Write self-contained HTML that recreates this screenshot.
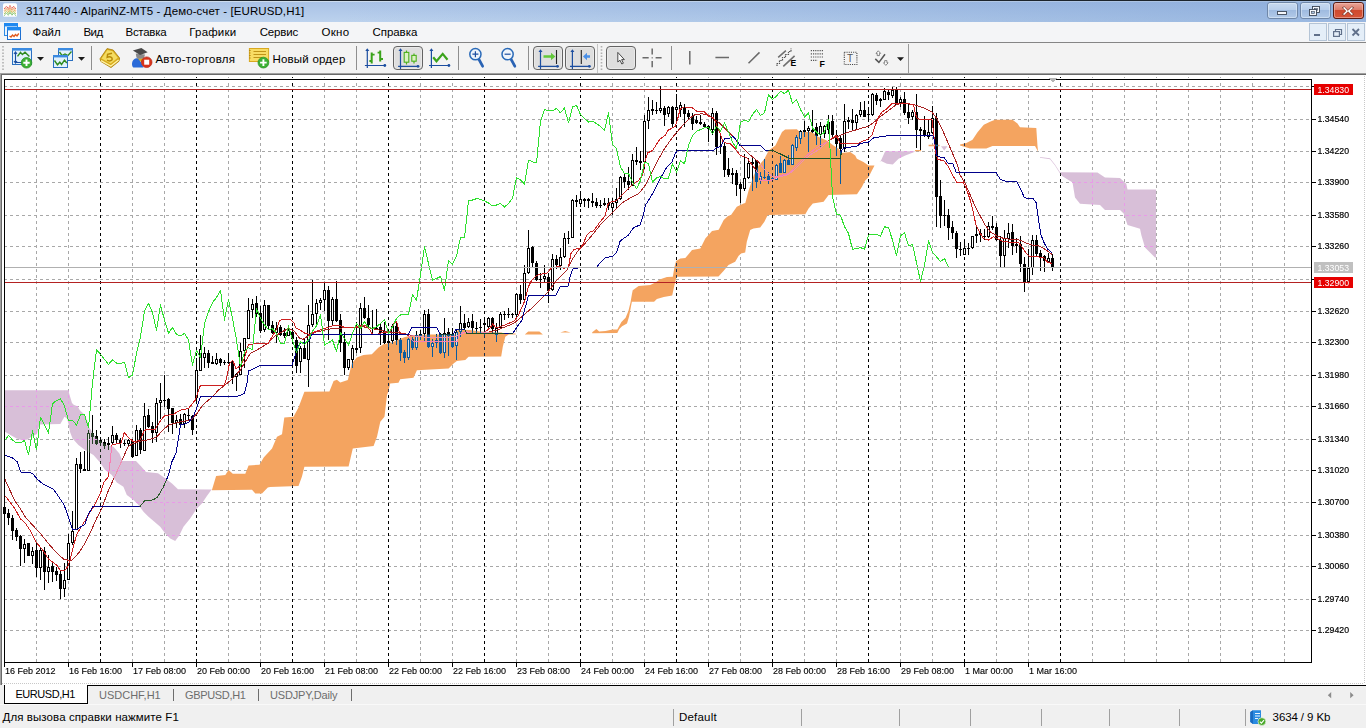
<!DOCTYPE html>
<html lang="ru"><head><meta charset="utf-8"><title>3117440 - AlpariNZ-MT5 - Демо-счет - [EURUSD,H1]</title>
<style>
*{box-sizing:border-box;margin:0;padding:0}
html,body{width:1366px;height:728px;overflow:hidden;background:#f0f0f0;font-family:"Liberation Sans",sans-serif;color:#000}
#app{position:relative;width:1366px;height:728px;overflow:hidden}
.abs{position:absolute}
#title{left:0;top:0;width:1366px;height:22px;background:linear-gradient(#1c242c 0,#1c242c 1px,rgba(0,0,0,0) 1px),linear-gradient(to right,rgba(110,150,208,0) 25%,rgba(110,150,208,0.45) 100%),linear-gradient(#cddcee 0,#cddcee 2px,#a9c2e6 2px,#bcd2ed 22px)}
#title .txt{left:26px;top:5px;font-size:11.5px;line-height:13px;letter-spacing:0.1px;white-space:nowrap;color:#000}
#menu{left:0;top:22px;width:1366px;height:21px;background:#f4f5f7;border-bottom:1px solid #858585}
#menu span{position:absolute;top:4px;font-size:11.5px;line-height:13px;white-space:nowrap}
#tool{left:0;top:43px;width:1366px;height:30px;background:#f3f3f3}
.sep{position:absolute;top:46px;width:1px;height:24px;background:#8e8e8e}
.tbtn{position:absolute;top:46px;height:24px;border:1px solid #636363;border-radius:4px;background:#dedede;box-shadow:inset 0 0 0 1px #e9e9e9}
.tl{position:absolute;top:53px;font-size:11.5px;line-height:13px;white-space:nowrap}
#mdi{left:0;top:73px;width:1366px;height:612px;background:#fff;border-left:1px solid #a0a0a0;border-top:1px solid #a0a0a0}
#mdi:before{content:"";position:absolute;left:0;top:0;right:0;bottom:0;border-left:1px solid #696969;border-top:1px solid #696969}
#tabs{left:0;top:685px;width:1366px;height:19px;background:#f0f0f0}
#tabline{left:88px;top:685px;width:1278px;height:1px;background:#000}
#tabs .t{position:absolute;top:4px;font-size:11px;line-height:13px;color:#6d6d6d;white-space:nowrap}
#tabact{left:4px;top:685px;width:84px;height:19px;background:#fff;border:1px solid #000;border-top:none}
#tabact span{position:absolute;left:10.5px;top:3px;font-size:11px;line-height:13px;letter-spacing:-0.47px;white-space:nowrap}
.tsep{position:absolute;top:689px;width:1px;height:12px;background:#6d6d6d}
#status{left:0;top:704px;width:1366px;height:24px;background:#f0f0f0;border-top:1px solid #f9f9f9}
#status .s{position:absolute;top:6.4px;font-size:11.5px;line-height:13px;white-space:nowrap}
.ssep{position:absolute;top:709px;width:1px;height:17px;background:#a0a0a0}
svg{position:absolute;left:0;top:0;overflow:visible}
svg text{font-family:"Liberation Sans",sans-serif}
</style></head><body><div id="app">
<div id="title" class="abs"><div class="abs txt">3117440 - AlpariNZ-MT5 - Демо-счет - [EURUSD,H1]</div></div>
<div id="menu" class="abs"><span style="left:32.4px">Файл</span><span style="left:83.4px;letter-spacing:-0.45px">Вид</span><span style="left:125.5px;letter-spacing:-0.28px">Вставка</span><span style="left:189.3px;letter-spacing:0.18px">Графики</span><span style="left:259.7px;letter-spacing:-0.18px">Сервис</span><span style="left:321.4px;letter-spacing:0.35px">Окно</span><span style="left:372.5px;letter-spacing:-0.05px">Справка</span></div>
<div id="tool" class="abs"></div>
<div class="sep" style="left:91px"></div><div class="sep" style="left:356px"></div><div class="sep" style="left:458px"></div><div class="sep" style="left:528px"></div><div class="sep" style="left:597px;top:44px;height:29px;background:#c4c4c4"></div><div class="sep" style="left:671px"></div><div class="sep" style="left:908px;top:44px;height:29px;background:#9a9a9a"></div>
<div class="tbtn" style="left:393px;width:30px"></div><div class="tbtn" style="left:533px;width:30px"></div><div class="tbtn" style="left:565px;width:30px"></div><div class="tbtn" style="left:606px;width:30px"></div>
<div class="tl" style="left:155.4px;letter-spacing:0.31px">Авто-торговля</div><div class="tl" style="left:272.4px;letter-spacing:0.22px">Новый ордер</div>
<div id="mdi" class="abs"></div>
<div id="tabs" class="abs"><span class="t" style="left:99px">USDCHF,H1</span><span class="t" style="left:185px;letter-spacing:-0.34px">GBPUSD,H1</span><span class="t" style="left:270px;letter-spacing:-0.17px">USDJPY,Daily</span></div>
<div class="tsep" style="left:173px"></div><div class="tsep" style="left:258px"></div><div class="tsep" style="left:351px"></div>
<div id="tabline" class="abs"></div><div id="tabact" class="abs"><span>EURUSD,H1</span></div>
<div id="status" class="abs"><span class="s" style="left:2.5px;letter-spacing:0.09px">Для вызова справки нажмите F1</span><span class="s" style="left:679px;letter-spacing:0.19px">Default</span><span class="s" style="left:1272.6px;letter-spacing:-0.1px">3634 / 9 Kb</span></div>
<div class="ssep" style="left:673px"></div><div class="ssep" style="left:801px"></div><div class="ssep" style="left:899px"></div><div class="ssep" style="left:970px"></div><div class="ssep" style="left:1041px"></div><div class="ssep" style="left:1109px"></div><div class="ssep" style="left:1179px"></div><div class="ssep" style="left:1245px"></div>
<svg width="1366" height="728" viewBox="0 0 1366 728"><rect x="3" y="3.3" width="14" height="13.4" rx="1.5" fill="#fff"/><polyline points="4.3,8.8 6.4,6.2 8.3,8.4 10,5.6000000000000005 11.9,8.4 13.7,6.2 15.7,8.8" fill="none" stroke="#e03a2a" stroke-width="1" stroke-dasharray="1 0.5"/><polyline points="4.3,10.5 6.4,7.9 8.3,10.100000000000001 10,7.300000000000001 11.9,10.100000000000001 13.7,7.9 15.7,10.5" fill="none" stroke="#e8702a" stroke-width="1" stroke-dasharray="1 0.5"/><polyline points="4.3,12.2 6.4,9.6 8.3,11.8 10,9.0 11.9,11.8 13.7,9.6 15.7,12.2" fill="none" stroke="#e0a030" stroke-width="1" stroke-dasharray="1 0.5"/><polyline points="4.3,13.9 6.4,11.3 8.3,13.5 10,10.700000000000001 11.9,13.5 13.7,11.3 15.7,13.9" fill="none" stroke="#9ab83a" stroke-width="1" stroke-dasharray="1 0.5"/><polyline points="4.3,15.6 6.4,13.0 8.3,15.2 10,12.4 11.9,15.2 13.7,13.0 15.7,15.6" fill="none" stroke="#58b04a" stroke-width="1" stroke-dasharray="1 0.5"/><rect x="4.5" y="23.5" width="13" height="12" fill="#eaf4fd" stroke="#2f8be6"/><rect x="4" y="23" width="14" height="3.4" fill="#1e88f0"/><rect x="7.5" y="27.5" width="13" height="12" fill="#fff" stroke="#1d6fd0"/><rect x="7" y="27" width="14" height="3.4" fill="#1e88f0"/><polyline points="9.5,36 11,37 12.5,35 14,36.5 15.5,34.5 17,36 18.8,33.5" fill="none" stroke="#e25a1c" stroke-width="1.3"/><rect x="12.5" y="48.5" width="19" height="16" fill="#e2f1fc" stroke="#2a6fc0"/><rect x="12" y="48" width="20" height="2.6" fill="#3b8ae0"/><path d="M15.5 52.5V62.5M14 54L15.5 52L17 54M14 61L15.5 63L17 61M15 62.5H23" stroke="#1c4ea0" fill="none" stroke-width="1.1"/><polyline points="17.5,56.4 20.5,52.3 22.4,54.6 25,52.3 29.4,56.6" fill="none" stroke="#2e8a1e" stroke-width="1.4"/><circle cx="26.5" cy="62.8" r="5.3" fill="#3cb034" stroke="#2c9426" stroke-width="0.8"/><path d="M26.5 59.6V66M23.3 62.8H29.7" stroke="#fff" stroke-width="1.9"/><path d="M37 57H44L40.5 60.8Z" fill="#1a1a1a"/><rect x="58.5" y="48.5" width="14" height="12" fill="#e2f1fc" stroke="#2a6fc0"/><rect x="58" y="48" width="15" height="2.4" fill="#3b8ae0"/><polyline points="59.5,52 62,55.5 65,54 68,55.5 71.5,51.5" fill="none" stroke="#2e8a1e" stroke-width="1.3"/><rect x="53.5" y="55.5" width="14" height="12" fill="#e2f1fc" stroke="#2a6fc0"/><rect x="53" y="55" width="15" height="2.4" fill="#3b8ae0"/><polyline points="54.5,60.5 57.5,64.8 59.8,62.2 61.5,64.5 64.5,60.2 66.8,63" fill="none" stroke="#2e8a1e" stroke-width="1.4"/><path d="M78 57H85L81.5 60.8Z" fill="#1a1a1a"/><path d="M100 58.8L107 48.6L113.2 50L119.6 58L119 61.2L111 67.6L100.8 61.4Z" fill="#d9ac1c" stroke="#a87c0a" stroke-width="0.8"/><path d="M101.5 58.6L107.4 50L112.6 51.2L117.8 57.8L110.8 63.6Z" fill="#f4dc62"/><path d="M101 60.6L110.8 66L118.6 60" fill="none" stroke="#fff3a8" stroke-width="1.2"/><path d="M112 53.2L107.6 54.4L107.2 57.2C109.6 56.2 112.4 57.2 112.2 59.2C112 61 109 61.4 107 60.2" fill="none" stroke="#b88a08" stroke-width="1.5"/><path d="M132 64C132 59.5 135.5 57.6 139 58.4L143.6 67.6H133.4C132.4 66.8 132 65.6 132 64Z" fill="#2a6ad8"/><path d="M137.5 58.2L143.4 58.2L141.6 62.6Z" fill="#d8b020"/><path d="M135.8 53.6L145 54.6L144 57.8C141.4 59.2 138.4 58.8 136.4 57.4Z" fill="#8a8a8a"/><path d="M132.9 50.4L141.4 48L147.7 52.2L140.1 55Z" fill="#4a4a4a"/><circle cx="146.7" cy="62.2" r="5.3" fill="#d8341c" stroke="#b82410" stroke-width="0.7"/><rect x="144.2" y="59.7" width="5" height="5" fill="#fff"/><rect x="249.4" y="48.5" width="19.2" height="13" fill="#f8dc64" stroke="#d8a820"/><path d="M249 50.5h1.6M249 53h1.6M249 55.5h1.6M249 58h1.6" stroke="#b88a10" stroke-width="1"/><path d="M253.5 51.5H266M253.5 54.5H266M253.5 57.5H262" stroke="#c09418" stroke-width="1.2"/><circle cx="263.4" cy="62.6" r="5.4" fill="#3cb034" stroke="#2c9426" stroke-width="0.8"/><path d="M263.4 59.3V65.9M260.1 62.6H266.7" stroke="#fff" stroke-width="1.9"/><path d="M367.3 49.6V68.1M364.90000000000003 65.5H384.8" stroke="#1c4ea0" stroke-width="1.2" fill="none"/><path d="M365.3 51.0L367.3 48.2L369.3 51.0Z" fill="#1c4ea0"/><circle cx="384.8" cy="65.5" r="1.4" fill="#1c4ea0"/><path d="M371.7 52.4V63.4M380.2 50.6V61.6" stroke="#3aa31a" stroke-width="2"/><path d="M369.4 61H371.7M371.7 54.6H374.6M377.6 52.6H380.2M380.2 59H383" stroke="#3aa31a" stroke-width="1.8"/><path d="M400.5 49.6V68.89999999999999M398.1 66.3H418.0" stroke="#1c4ea0" stroke-width="1.2" fill="none"/><path d="M398.5 51.0L400.5 48.2L402.5 51.0Z" fill="#1c4ea0"/><circle cx="418.0" cy="66.3" r="1.4" fill="#1c4ea0"/><path d="M406.5 50.5V64.5M414 53.5V63.5" stroke="#4cb01c" stroke-width="1.2"/><rect x="404.2" y="52.4" width="4.6" height="9.8" fill="#dcf2c4" stroke="#4cb01c" stroke-width="1.1"/><rect x="411.8" y="55.4" width="4.4" height="5.8" fill="#dcf2c4" stroke="#4cb01c" stroke-width="1.1"/><path d="M431.4 49.6V68.1M429.0 65.5H448.9" stroke="#1c4ea0" stroke-width="1.2" fill="none"/><path d="M429.4 51.0L431.4 48.2L433.4 51.0Z" fill="#1c4ea0"/><circle cx="448.9" cy="65.5" r="1.4" fill="#1c4ea0"/><polyline points="433.2,57.2 436.5,61.2 442.7,53.9 447.5,59.7" fill="none" stroke="#3aa31a" stroke-width="2.2"/><path d="M478.79999999999995 59.2L482.59999999999997 66.2" stroke="#2a63b4" stroke-width="2.8" stroke-linecap="round"/><circle cx="475.4" cy="54.2" r="5.6" fill="#eef4fb" stroke="#2a6ab8" stroke-width="1.5"/><path d="M472.4 54.2H478.4M475.4 51.2V57.2" stroke="#1c4ea0" stroke-width="1.2"/><path d="M511.0 59.2L514.8000000000001 66.2" stroke="#2a63b4" stroke-width="2.8" stroke-linecap="round"/><circle cx="507.6" cy="54.2" r="5.6" fill="#eef4fb" stroke="#2a6ab8" stroke-width="1.5"/><path d="M504.6 54.2H510.6" stroke="#1c4ea0" stroke-width="1.2"/><path d="M540.5 50.6V68.89999999999999M538.1 66.3H557.5" stroke="#1c4ea0" stroke-width="1.2" fill="none"/><path d="M538.5 52.0L540.5 49.2L542.5 52.0Z" fill="#1c4ea0"/><circle cx="557.5" cy="66.3" r="1.4" fill="#1c4ea0"/><path d="M543.5 55.2H551V52.8L555.4 56.5L551 60.2V57.8H543.5Z" fill="#62c83a"/><path d="M556.5 50V64" stroke="#222" stroke-width="1.1"/><path d="M572.4 50.6V68.89999999999999M570.0 66.3H589.4" stroke="#1c4ea0" stroke-width="1.2" fill="none"/><path d="M570.4 52.0L572.4 49.2L574.4 52.0Z" fill="#1c4ea0"/><circle cx="589.4" cy="66.3" r="1.4" fill="#1c4ea0"/><path d="M590 55.2H587V52.8L583 56.5L587 60.2V57.8H590Z" fill="#4a90e8"/><path d="M581.3 50V64" stroke="#222" stroke-width="1.1"/><path d="M601.5 46V70" stroke="#b0b0b0" stroke-width="1.6" stroke-dasharray="1.5 1.7"/><path d="M3 46V70" stroke="#b0b0b0" stroke-width="1.6" stroke-dasharray="1.5 1.7"/><path d="M617.8 52.4V62L620 60.2L621.8 64L623.4 63.2L621.6 59.6H624.4Z" fill="#f8f8f8" stroke="#4a4a4a" stroke-width="1"/><path d="M642.5 57.8H648.7M655.6 57.8H661.6M652.2 48.4V54.6M652.2 61V67.2" stroke="#6a6a6a" stroke-width="1.5"/><rect x="651.6" y="57.2" width="1.2" height="1.2" fill="#6a6a6a"/><path d="M689.8 51V64.5M715.4 57.6H729M748.5 63.3L759.5 52.4" stroke="#6a6a6a" stroke-width="1.5" fill="none"/><path d="M778.2 57.3L785.9 50.7M783.3 66.3L794.6 55.8" stroke="#707070" stroke-width="1.6"/><path d="M777 66V63.5H779.5V60.5H782.5V57.5H785.5V54.5H788.5V51.5H791V48.5" stroke="#555" stroke-width="1.2" fill="none" stroke-dasharray="1.4 0.8"/><text x="790.4" y="66.4" font-size="8.6" font-weight="bold" font-family="Liberation Sans,sans-serif">E</text><path d="M810.8 50.7H824M810.8 53.8H824M810.8 57H824M810.8 60.4H817.5" stroke="#555" stroke-width="1.2" stroke-dasharray="1.2 1"/><text x="819.6" y="66.6" font-size="8.8" font-weight="bold" font-family="Liberation Sans,sans-serif">F</text><rect x="844.3" y="52.3" width="12.6" height="12.2" fill="none" stroke="#444" stroke-width="1.1" stroke-dasharray="1.1 1.1"/><text x="846.9" y="62.4" font-size="10" font-family="Liberation Serif,serif" fill="#555">T</text><path d="M875.3 58.9L878.9 62.4L885 54.2" stroke="#555" stroke-width="1.5" fill="none"/><path d="M878.3 50.8L880.6 53.4H879.4V55.6H877.2V53.4H876Z M885.8 65.4L883.5 62.8H884.7V60.6H886.9V62.8H888.1Z" fill="#fff" stroke="#666" stroke-width="0.8"/><path d="M897 57.2H904L900.5 60.9Z" fill="#1a1a1a"/><defs><linearGradient id="gb" x1="0" y1="0" x2="0" y2="1"><stop offset="0" stop-color="#c9dbf1"/><stop offset="0.45" stop-color="#b9cfec"/><stop offset="0.5" stop-color="#9fbbe0"/><stop offset="1" stop-color="#b4cbe9"/></linearGradient><linearGradient id="gr" x1="0" y1="0" x2="0" y2="1"><stop offset="0" stop-color="#eaa79b"/><stop offset="0.45" stop-color="#dd7c6a"/><stop offset="0.5" stop-color="#cf4a2f"/><stop offset="1" stop-color="#d8563a"/></linearGradient></defs><rect x="1267.5" y="2.5" width="30" height="16" rx="2.5" fill="url(#gb)" stroke="#6f87a8"/><rect x="1268.5" y="3.5" width="28" height="14" rx="1.8" fill="none" stroke="#e4eefa" stroke-opacity="0.55"/><rect x="1300.5" y="2.5" width="30" height="16" rx="2.5" fill="url(#gb)" stroke="#6f87a8"/><rect x="1301.5" y="3.5" width="28" height="14" rx="1.8" fill="none" stroke="#e4eefa" stroke-opacity="0.55"/><rect x="1333.5" y="2.5" width="30" height="16" rx="2.5" fill="url(#gr)" stroke="#5a1c14"/><rect x="1334.5" y="3.5" width="28" height="14" rx="1.8" fill="none" stroke="#f4c2b8" stroke-opacity="0.55"/><rect x="1277.5" y="11.5" width="9" height="3" fill="#f4f6fa" stroke="#3c4656" stroke-width="0.9"/><rect x="1312.5" y="6.5" width="7" height="6" fill="#f4f6fa" stroke="#3c4656" stroke-width="0.9"/><rect x="1314.5" y="8.5" width="3" height="2" fill="#a8c0e0" stroke="#3c4656" stroke-width="0.6"/><rect x="1309.5" y="9.5" width="7" height="6" fill="#f4f6fa" stroke="#3c4656" stroke-width="0.9"/><rect x="1311.5" y="11.5" width="3" height="2" fill="#a8c0e0" stroke="#3c4656" stroke-width="0.6"/><path d="M1344.4 6.8L1348 10.4L1351.6 6.8L1353.8 7.6L1350.2 11L1353.8 14.4L1351.6 15.2L1348 11.8L1344.4 15.2L1342.2 14.4L1345.8 11L1342.2 7.6Z" fill="#fff" stroke="#6a2a20" stroke-width="0.7"/><rect x="1309.5" y="23.5" width="17" height="17" fill="#e4eef8" stroke="#b4c4d6"/><rect x="1328.5" y="23.5" width="17" height="17" fill="#e4eef8" stroke="#b4c4d6"/><rect x="1347.5" y="23.5" width="17" height="17" fill="#e4eef8" stroke="#b4c4d6"/><rect x="1314" y="34" width="6" height="2" fill="#60708a"/><path d="M1335.5 31V29.5H1341.5V34.5H1340" stroke="#60708a" stroke-width="1.2" fill="none"/><rect x="1333.6" y="31.6" width="5.8" height="4.8" fill="none" stroke="#60708a" stroke-width="1.2"/><path d="M1352.5 29L1359 35.5M1359 29L1352.5 35.5" stroke="#60708a" stroke-width="1.8"/><path d="M1250.3 712L1253 710.2H1261V724H1253L1250.3 722Z" fill="#2a8ae0"/><path d="M1250.3 712L1253 710.2V724L1250.3 722Z" fill="#1a6ac0"/><path d="M1255 713.5H1260M1255 716H1260M1255 718.5H1258" stroke="#e8f4ff" stroke-width="1.1"/><circle cx="1261.9" cy="721.6" r="3.9" fill="#4aa82a" stroke="#e8f4e0" stroke-width="0.7"/><path d="M1259.9 721.6L1261.4 723.1L1264 720.2" stroke="#fff" stroke-width="1.1" fill="none"/><path d="M1331.2 692.1V698.3L1327.8 695.2Z M1350.2 692.1V698.3L1353.6 695.2Z" fill="#8c8c8c"/></svg>
<svg width="1366" height="728" viewBox="0 0 1366 728" style="isolation:isolate"><rect x="2" y="75" width="1362" height="608" fill="#fff"/><g shape-rendering="crispEdges"><line x1="4" y1="86.5" x2="1311" y2="86.5" stroke="#a8a8a8" stroke-dasharray="3 3"/><line x1="4" y1="119.5" x2="1311" y2="119.5" stroke="#a8a8a8" stroke-dasharray="3 3"/><line x1="4" y1="151.5" x2="1311" y2="151.5" stroke="#a8a8a8" stroke-dasharray="3 3"/><line x1="4" y1="182.5" x2="1311" y2="182.5" stroke="#a8a8a8" stroke-dasharray="3 3"/><line x1="4" y1="215.5" x2="1311" y2="215.5" stroke="#a8a8a8" stroke-dasharray="3 3"/><line x1="4" y1="246.5" x2="1311" y2="246.5" stroke="#a8a8a8" stroke-dasharray="3 3"/><line x1="4" y1="279.5" x2="1311" y2="279.5" stroke="#a8a8a8" stroke-dasharray="3 3"/><line x1="4" y1="311.5" x2="1311" y2="311.5" stroke="#a8a8a8" stroke-dasharray="3 3"/><line x1="4" y1="342.5" x2="1311" y2="342.5" stroke="#a8a8a8" stroke-dasharray="3 3"/><line x1="4" y1="375.5" x2="1311" y2="375.5" stroke="#a8a8a8" stroke-dasharray="3 3"/><line x1="4" y1="406.5" x2="1311" y2="406.5" stroke="#a8a8a8" stroke-dasharray="3 3"/><line x1="4" y1="439.5" x2="1311" y2="439.5" stroke="#a8a8a8" stroke-dasharray="3 3"/><line x1="4" y1="470.5" x2="1311" y2="470.5" stroke="#a8a8a8" stroke-dasharray="3 3"/><line x1="4" y1="502.5" x2="1311" y2="502.5" stroke="#a8a8a8" stroke-dasharray="3 3"/><line x1="4" y1="535.5" x2="1311" y2="535.5" stroke="#a8a8a8" stroke-dasharray="3 3"/><line x1="4" y1="566.5" x2="1311" y2="566.5" stroke="#a8a8a8" stroke-dasharray="3 3"/><line x1="4" y1="599.5" x2="1311" y2="599.5" stroke="#a8a8a8" stroke-dasharray="3 3"/><line x1="4" y1="630.5" x2="1311" y2="630.5" stroke="#a8a8a8" stroke-dasharray="3 3"/><line x1="36.5" y1="80" x2="36.5" y2="662" stroke="#a8a8a8" stroke-dasharray="3 3" stroke-dashoffset="3"/><rect x="36" y="77" width="1" height="1" fill="#a8a8a8"/><line x1="68.5" y1="80" x2="68.5" y2="662" stroke="#a8a8a8" stroke-dasharray="3 3" stroke-dashoffset="3"/><rect x="68" y="77" width="1" height="1" fill="#a8a8a8"/><line x1="100.5" y1="80" x2="100.5" y2="662" stroke="#000" stroke-dasharray="3 3" stroke-dashoffset="3"/><rect x="100" y="77" width="1" height="1" fill="#000"/><line x1="132.5" y1="80" x2="132.5" y2="662" stroke="#a8a8a8" stroke-dasharray="3 3" stroke-dashoffset="3"/><rect x="132" y="77" width="1" height="1" fill="#a8a8a8"/><line x1="164.5" y1="80" x2="164.5" y2="662" stroke="#a8a8a8" stroke-dasharray="3 3" stroke-dashoffset="3"/><rect x="164" y="77" width="1" height="1" fill="#a8a8a8"/><line x1="196.5" y1="80" x2="196.5" y2="662" stroke="#000" stroke-dasharray="3 3" stroke-dashoffset="3"/><rect x="196" y="77" width="1" height="1" fill="#000"/><line x1="228.5" y1="80" x2="228.5" y2="662" stroke="#a8a8a8" stroke-dasharray="3 3" stroke-dashoffset="3"/><rect x="228" y="77" width="1" height="1" fill="#a8a8a8"/><line x1="260.5" y1="80" x2="260.5" y2="662" stroke="#a8a8a8" stroke-dasharray="3 3" stroke-dashoffset="3"/><rect x="260" y="77" width="1" height="1" fill="#a8a8a8"/><line x1="292.5" y1="80" x2="292.5" y2="662" stroke="#000" stroke-dasharray="3 3" stroke-dashoffset="3"/><rect x="292" y="77" width="1" height="1" fill="#000"/><line x1="324.5" y1="80" x2="324.5" y2="662" stroke="#a8a8a8" stroke-dasharray="3 3" stroke-dashoffset="3"/><rect x="324" y="77" width="1" height="1" fill="#a8a8a8"/><line x1="356.5" y1="80" x2="356.5" y2="662" stroke="#a8a8a8" stroke-dasharray="3 3" stroke-dashoffset="3"/><rect x="356" y="77" width="1" height="1" fill="#a8a8a8"/><line x1="388.5" y1="80" x2="388.5" y2="662" stroke="#000" stroke-dasharray="3 3" stroke-dashoffset="3"/><rect x="388" y="77" width="1" height="1" fill="#000"/><line x1="420.5" y1="80" x2="420.5" y2="662" stroke="#a8a8a8" stroke-dasharray="3 3" stroke-dashoffset="3"/><rect x="420" y="77" width="1" height="1" fill="#a8a8a8"/><line x1="452.5" y1="80" x2="452.5" y2="662" stroke="#a8a8a8" stroke-dasharray="3 3" stroke-dashoffset="3"/><rect x="452" y="77" width="1" height="1" fill="#a8a8a8"/><line x1="484.5" y1="80" x2="484.5" y2="662" stroke="#000" stroke-dasharray="3 3" stroke-dashoffset="3"/><rect x="484" y="77" width="1" height="1" fill="#000"/><line x1="516.5" y1="80" x2="516.5" y2="662" stroke="#a8a8a8" stroke-dasharray="3 3" stroke-dashoffset="3"/><rect x="516" y="77" width="1" height="1" fill="#a8a8a8"/><line x1="548.5" y1="80" x2="548.5" y2="662" stroke="#a8a8a8" stroke-dasharray="3 3" stroke-dashoffset="3"/><rect x="548" y="77" width="1" height="1" fill="#a8a8a8"/><line x1="580.5" y1="80" x2="580.5" y2="662" stroke="#000" stroke-dasharray="3 3" stroke-dashoffset="3"/><rect x="580" y="77" width="1" height="1" fill="#000"/><line x1="612.5" y1="80" x2="612.5" y2="662" stroke="#a8a8a8" stroke-dasharray="3 3" stroke-dashoffset="3"/><rect x="612" y="77" width="1" height="1" fill="#a8a8a8"/><line x1="644.5" y1="80" x2="644.5" y2="662" stroke="#a8a8a8" stroke-dasharray="3 3" stroke-dashoffset="3"/><rect x="644" y="77" width="1" height="1" fill="#a8a8a8"/><line x1="676.5" y1="80" x2="676.5" y2="662" stroke="#000" stroke-dasharray="3 3" stroke-dashoffset="3"/><rect x="676" y="77" width="1" height="1" fill="#000"/><line x1="708.5" y1="80" x2="708.5" y2="662" stroke="#a8a8a8" stroke-dasharray="3 3" stroke-dashoffset="3"/><rect x="708" y="77" width="1" height="1" fill="#a8a8a8"/><line x1="740.5" y1="80" x2="740.5" y2="662" stroke="#a8a8a8" stroke-dasharray="3 3" stroke-dashoffset="3"/><rect x="740" y="77" width="1" height="1" fill="#a8a8a8"/><line x1="772.5" y1="80" x2="772.5" y2="662" stroke="#000" stroke-dasharray="3 3" stroke-dashoffset="3"/><rect x="772" y="77" width="1" height="1" fill="#000"/><line x1="804.5" y1="80" x2="804.5" y2="662" stroke="#a8a8a8" stroke-dasharray="3 3" stroke-dashoffset="3"/><rect x="804" y="77" width="1" height="1" fill="#a8a8a8"/><line x1="836.5" y1="80" x2="836.5" y2="662" stroke="#a8a8a8" stroke-dasharray="3 3" stroke-dashoffset="3"/><rect x="836" y="77" width="1" height="1" fill="#a8a8a8"/><line x1="868.5" y1="80" x2="868.5" y2="662" stroke="#000" stroke-dasharray="3 3" stroke-dashoffset="3"/><rect x="868" y="77" width="1" height="1" fill="#000"/><line x1="900.5" y1="80" x2="900.5" y2="662" stroke="#a8a8a8" stroke-dasharray="3 3" stroke-dashoffset="3"/><rect x="900" y="77" width="1" height="1" fill="#a8a8a8"/><line x1="932.5" y1="80" x2="932.5" y2="662" stroke="#a8a8a8" stroke-dasharray="3 3" stroke-dashoffset="3"/><rect x="932" y="77" width="1" height="1" fill="#a8a8a8"/><line x1="964.5" y1="80" x2="964.5" y2="662" stroke="#000" stroke-dasharray="3 3" stroke-dashoffset="3"/><rect x="964" y="77" width="1" height="1" fill="#000"/><line x1="996.5" y1="80" x2="996.5" y2="662" stroke="#a8a8a8" stroke-dasharray="3 3" stroke-dashoffset="3"/><rect x="996" y="77" width="1" height="1" fill="#a8a8a8"/><line x1="1028.5" y1="80" x2="1028.5" y2="662" stroke="#a8a8a8" stroke-dasharray="3 3" stroke-dashoffset="3"/><rect x="1028" y="77" width="1" height="1" fill="#a8a8a8"/><line x1="1060.5" y1="80" x2="1060.5" y2="662" stroke="#000" stroke-dasharray="3 3" stroke-dashoffset="3"/><rect x="1060" y="77" width="1" height="1" fill="#000"/><line x1="1092.5" y1="80" x2="1092.5" y2="662" stroke="#a8a8a8" stroke-dasharray="3 3" stroke-dashoffset="3"/><rect x="1092" y="77" width="1" height="1" fill="#a8a8a8"/><line x1="1124.5" y1="80" x2="1124.5" y2="662" stroke="#a8a8a8" stroke-dasharray="3 3" stroke-dashoffset="3"/><rect x="1124" y="77" width="1" height="1" fill="#a8a8a8"/><line x1="1156.5" y1="80" x2="1156.5" y2="662" stroke="#a8a8a8" stroke-dasharray="3 3" stroke-dashoffset="3"/><rect x="1156" y="77" width="1" height="1" fill="#a8a8a8"/><line x1="1188.5" y1="80" x2="1188.5" y2="662" stroke="#a8a8a8" stroke-dasharray="3 3" stroke-dashoffset="3"/><rect x="1188" y="77" width="1" height="1" fill="#a8a8a8"/><line x1="1220.5" y1="80" x2="1220.5" y2="662" stroke="#a8a8a8" stroke-dasharray="3 3" stroke-dashoffset="3"/><rect x="1220" y="77" width="1" height="1" fill="#a8a8a8"/><line x1="1252.5" y1="80" x2="1252.5" y2="662" stroke="#a8a8a8" stroke-dasharray="3 3" stroke-dashoffset="3"/><rect x="1252" y="77" width="1" height="1" fill="#a8a8a8"/><line x1="1284.5" y1="80" x2="1284.5" y2="662" stroke="#a8a8a8" stroke-dasharray="3 3" stroke-dashoffset="3"/><rect x="1284" y="77" width="1" height="1" fill="#a8a8a8"/></g><defs><clipPath id="cpO"><path d="M212.0 489.8 L216.1 475.9 L225.3 475.1 L228.6 470.1 L232.8 473.8 L245.3 473.8 L248.6 465.4 L259.5 464.7 L263.7 457.6 L272.0 448.4 L277.0 436.7 L282.0 434.2 L284.3 417.6 L293.5 416.7 L298.5 407.6 L304.4 391.7 L329.4 391.4 L333.6 380.9 L336.9 379.7 L340.3 382.5 L347.8 380.0 L351.8 363.5 L356.8 357.6 L363.4 355.1 L371.8 354.3 L378.5 347.6 L383.5 344.3 L392.0 342.5 L399.6 339.0 L405.0 337.0 L414.0 335.0 L430.0 334.4 L455.0 334.4 L458.0 329.7 L470.0 330.0 L480.0 331.5 L501.6 332.5 L505.0 334.0 L508.7 334.0 L508.7 334.6 L505.3 336.8 L502.8 346.8 L501.2 356.5 L468.6 356.8 L465.3 360.1 L456.9 361.0 L453.6 363.5 L448.6 368.5 L416.9 370.2 L413.5 377.7 L400.2 379.3 L398.5 382.7 L390.2 383.5 L388.5 391.0 L387.0 395.0 L384.5 416.7 L380.3 421.8 L377.0 436.8 L373.6 446.0 L352.8 448.5 L348.6 466.5 L304.4 466.8 L301.9 476.8 L298.5 486.0 L270.1 486.9 L267.8 487.6 L262.0 493.5 L255.3 493.5 L252.0 489.8 L212.0 490.3ZM592.2 332.2 L596.4 328.9 L599.2 331.4 L605.4 331.0 L612.4 329.6 L617.3 329.6 L621.4 322.0 L625.6 317.8 L628.4 310.9 L630.5 302.5 L631.9 294.2 L632.7 290.2 L638.6 286.0 L650.3 285.1 L655.3 282.6 L660.3 279.3 L666.9 277.1 L672.8 276.8 L674.5 266.8 L676.1 260.9 L680.3 258.4 L685.3 258.1 L692.0 250.1 L700.3 248.4 L705.3 238.4 L712.0 230.9 L718.7 229.7 L723.7 220.0 L728.0 215.9 L731.0 215.1 L736.8 206.7 L743.5 203.4 L745.3 203.0 L748.6 190.5 L753.7 175.5 L758.7 165.5 L764.5 158.8 L768.7 150.4 L775.4 145.4 L778.7 138.8 L782.0 132.1 L785.1 129.6 L796.8 129.2 L800.1 132.1 L811.8 132.1 L818.5 137.1 L826.8 140.4 L833.5 145.4 L838.5 148.8 L841.8 153.0 L850.2 152.1 L855.2 155.5 L856.9 158.8 L863.5 162.1 L868.5 165.5 L874.4 165.5 L874.4 165.8 L871.9 170.5 L868.5 177.2 L865.2 180.5 L862.0 186.7 L857.0 194.2 L828.6 195.0 L823.6 201.7 L812.8 203.4 L808.6 208.4 L805.3 214.2 L767.7 215.1 L764.4 221.7 L760.2 227.6 L753.5 228.4 L750.2 230.1 L746.8 241.8 L745.2 252.6 L741.0 253.5 L738.5 256.0 L735.2 261.8 L728.5 265.1 L723.5 271.0 L718.5 276.5 L677.1 276.8 L676.1 278.5 L674.5 285.1 L672.2 295.4 L663.8 297.0 L656.9 299.0 L654.1 301.8 L631.9 301.8 L631.2 305.3 L629.1 316.4 L627.0 323.4 L622.1 326.2 L619.3 328.9 L617.3 332.9 L592.2 333.2ZM960.0 144.6 L966.3 143.0 L972.5 139.8 L977.5 132.3 L983.8 124.8 L990.0 121.8 L995.0 119.8 L1012.5 119.8 L1017.5 123.5 L1020.0 127.3 L1036.3 128.0 L1037.5 146.0 L1038.0 151.0 L1038.0 151.5 L1035.0 146.0 L992.5 146.0 L986.3 148.5 L970.0 148.5 L960.0 145.5ZM508.7 333.4 L515.7 333.4 L515.7 334.6 L508.7 334.6ZM524.8 334.6 L528.2 331.4 L539.4 331.4 L542.9 334.6ZM560.2 332.6 L565.1 331.0 L570.7 332.6ZM915.0 150.0 L921.0 150.0 L921.0 151.2 L915.0 151.2ZM928.6 144.8 L939.5 144.8 L939.5 146.3 L928.6 146.3Z"/></clipPath><clipPath id="cpP"><path d="M4.5 390.3 L68.3 390.3 L69.9 395.9 L72.0 403.0 L73.7 404.7 L77.9 406.4 L79.6 410.1 L83.8 413.9 L87.1 420.2 L88.8 426.9 L91.0 430.1 L96.0 437.6 L100.2 440.9 L106.8 445.1 L113.5 446.8 L119.4 453.5 L122.5 461.0 L136.0 461.0 L141.0 466.3 L146.0 472.0 L158.0 473.3 L165.5 478.4 L172.0 483.5 L178.0 489.3 L212.0 489.5 L211.1 490.3 L206.9 496.0 L201.9 503.5 L196.9 508.5 L190.2 518.5 L183.5 526.8 L179.4 535.2 L175.2 541.0 L170.2 538.5 L165.2 533.5 L160.2 526.8 L153.5 521.0 L148.5 516.8 L143.5 511.8 L138.5 505.1 L133.5 500.1 L126.8 495.1 L123.4 486.8 L116.8 482.6 L111.8 475.1 L105.1 470.1 L100.1 462.6 L93.4 455.1 L85.0 450.0 L78.4 445.0 L72.5 438.4 L70.0 432.0 L68.3 423.0 L67.0 418.5 L64.5 416.8 L60.3 424.0 L39.4 424.4 L36.9 434.0 L31.0 437.0 L27.6 439.4 L21.8 440.3 L16.7 438.6 L10.9 435.2 L4.5 431.5ZM1040.0 157.0 L1050.0 158.3 L1055.0 164.5 L1060.0 172.3 L1097.5 172.5 L1105.0 177.5 L1120.0 178.0 L1126.3 183.8 L1127.5 189.5 L1156.0 189.5 L1156.0 257.5 L1155.0 257.5 L1145.0 247.5 L1141.3 235.0 L1140.0 228.8 L1127.5 225.0 L1123.8 213.8 L1120.0 210.0 L1105.0 210.0 L1100.0 205.0 L1080.0 203.8 L1075.0 197.5 L1072.5 182.5 L1062.5 176.3 L1060.0 173.5 L1055.0 165.5 L1050.0 159.2 L1040.0 157.8ZM879.4 162.1 L881.0 160.5 L885.2 151.3 L913.6 151.3 L915.3 151.5 L912.0 153.0 L905.3 155.5 L898.6 158.8 L892.8 164.6 L886.9 163.8 L881.1 161.0ZM941.0 146.3 L947.5 146.3 L944.2 150.6Z"/></clipPath></defs><path d="M212.0 489.8 L216.1 475.9 L225.3 475.1 L228.6 470.1 L232.8 473.8 L245.3 473.8 L248.6 465.4 L259.5 464.7 L263.7 457.6 L272.0 448.4 L277.0 436.7 L282.0 434.2 L284.3 417.6 L293.5 416.7 L298.5 407.6 L304.4 391.7 L329.4 391.4 L333.6 380.9 L336.9 379.7 L340.3 382.5 L347.8 380.0 L351.8 363.5 L356.8 357.6 L363.4 355.1 L371.8 354.3 L378.5 347.6 L383.5 344.3 L392.0 342.5 L399.6 339.0 L405.0 337.0 L414.0 335.0 L430.0 334.4 L455.0 334.4 L458.0 329.7 L470.0 330.0 L480.0 331.5 L501.6 332.5 L505.0 334.0 L508.7 334.0 L508.7 334.6 L505.3 336.8 L502.8 346.8 L501.2 356.5 L468.6 356.8 L465.3 360.1 L456.9 361.0 L453.6 363.5 L448.6 368.5 L416.9 370.2 L413.5 377.7 L400.2 379.3 L398.5 382.7 L390.2 383.5 L388.5 391.0 L387.0 395.0 L384.5 416.7 L380.3 421.8 L377.0 436.8 L373.6 446.0 L352.8 448.5 L348.6 466.5 L304.4 466.8 L301.9 476.8 L298.5 486.0 L270.1 486.9 L267.8 487.6 L262.0 493.5 L255.3 493.5 L252.0 489.8 L212.0 490.3ZM592.2 332.2 L596.4 328.9 L599.2 331.4 L605.4 331.0 L612.4 329.6 L617.3 329.6 L621.4 322.0 L625.6 317.8 L628.4 310.9 L630.5 302.5 L631.9 294.2 L632.7 290.2 L638.6 286.0 L650.3 285.1 L655.3 282.6 L660.3 279.3 L666.9 277.1 L672.8 276.8 L674.5 266.8 L676.1 260.9 L680.3 258.4 L685.3 258.1 L692.0 250.1 L700.3 248.4 L705.3 238.4 L712.0 230.9 L718.7 229.7 L723.7 220.0 L728.0 215.9 L731.0 215.1 L736.8 206.7 L743.5 203.4 L745.3 203.0 L748.6 190.5 L753.7 175.5 L758.7 165.5 L764.5 158.8 L768.7 150.4 L775.4 145.4 L778.7 138.8 L782.0 132.1 L785.1 129.6 L796.8 129.2 L800.1 132.1 L811.8 132.1 L818.5 137.1 L826.8 140.4 L833.5 145.4 L838.5 148.8 L841.8 153.0 L850.2 152.1 L855.2 155.5 L856.9 158.8 L863.5 162.1 L868.5 165.5 L874.4 165.5 L874.4 165.8 L871.9 170.5 L868.5 177.2 L865.2 180.5 L862.0 186.7 L857.0 194.2 L828.6 195.0 L823.6 201.7 L812.8 203.4 L808.6 208.4 L805.3 214.2 L767.7 215.1 L764.4 221.7 L760.2 227.6 L753.5 228.4 L750.2 230.1 L746.8 241.8 L745.2 252.6 L741.0 253.5 L738.5 256.0 L735.2 261.8 L728.5 265.1 L723.5 271.0 L718.5 276.5 L677.1 276.8 L676.1 278.5 L674.5 285.1 L672.2 295.4 L663.8 297.0 L656.9 299.0 L654.1 301.8 L631.9 301.8 L631.2 305.3 L629.1 316.4 L627.0 323.4 L622.1 326.2 L619.3 328.9 L617.3 332.9 L592.2 333.2ZM960.0 144.6 L966.3 143.0 L972.5 139.8 L977.5 132.3 L983.8 124.8 L990.0 121.8 L995.0 119.8 L1012.5 119.8 L1017.5 123.5 L1020.0 127.3 L1036.3 128.0 L1037.5 146.0 L1038.0 151.0 L1038.0 151.5 L1035.0 146.0 L992.5 146.0 L986.3 148.5 L970.0 148.5 L960.0 145.5ZM508.7 333.4 L515.7 333.4 L515.7 334.6 L508.7 334.6ZM524.8 334.6 L528.2 331.4 L539.4 331.4 L542.9 334.6ZM560.2 332.6 L565.1 331.0 L570.7 332.6ZM915.0 150.0 L921.0 150.0 L921.0 151.2 L915.0 151.2ZM928.6 144.8 L939.5 144.8 L939.5 146.3 L928.6 146.3ZM4.5 390.3 L68.3 390.3 L69.9 395.9 L72.0 403.0 L73.7 404.7 L77.9 406.4 L79.6 410.1 L83.8 413.9 L87.1 420.2 L88.8 426.9 L91.0 430.1 L96.0 437.6 L100.2 440.9 L106.8 445.1 L113.5 446.8 L119.4 453.5 L122.5 461.0 L136.0 461.0 L141.0 466.3 L146.0 472.0 L158.0 473.3 L165.5 478.4 L172.0 483.5 L178.0 489.3 L212.0 489.5 L211.1 490.3 L206.9 496.0 L201.9 503.5 L196.9 508.5 L190.2 518.5 L183.5 526.8 L179.4 535.2 L175.2 541.0 L170.2 538.5 L165.2 533.5 L160.2 526.8 L153.5 521.0 L148.5 516.8 L143.5 511.8 L138.5 505.1 L133.5 500.1 L126.8 495.1 L123.4 486.8 L116.8 482.6 L111.8 475.1 L105.1 470.1 L100.1 462.6 L93.4 455.1 L85.0 450.0 L78.4 445.0 L72.5 438.4 L70.0 432.0 L68.3 423.0 L67.0 418.5 L64.5 416.8 L60.3 424.0 L39.4 424.4 L36.9 434.0 L31.0 437.0 L27.6 439.4 L21.8 440.3 L16.7 438.6 L10.9 435.2 L4.5 431.5ZM1040.0 157.0 L1050.0 158.3 L1055.0 164.5 L1060.0 172.3 L1097.5 172.5 L1105.0 177.5 L1120.0 178.0 L1126.3 183.8 L1127.5 189.5 L1156.0 189.5 L1156.0 257.5 L1155.0 257.5 L1145.0 247.5 L1141.3 235.0 L1140.0 228.8 L1127.5 225.0 L1123.8 213.8 L1120.0 210.0 L1105.0 210.0 L1100.0 205.0 L1080.0 203.8 L1075.0 197.5 L1072.5 182.5 L1062.5 176.3 L1060.0 173.5 L1055.0 165.5 L1050.0 159.2 L1040.0 157.8ZM879.4 162.1 L881.0 160.5 L885.2 151.3 L913.6 151.3 L915.3 151.5 L912.0 153.0 L905.3 155.5 L898.6 158.8 L892.8 164.6 L886.9 163.8 L881.1 161.0ZM941.0 146.3 L947.5 146.3 L944.2 150.6Z" fill="#fff"/><g shape-rendering="crispEdges"><path d="M4.5 505V520M8.5 509V525M12.5 515V540M16.5 528V541M20.5 535V566M24.5 539V563M28.5 543V556M32.5 547V564M36.5 542V577M40.5 547V580M44.5 547V590M48.5 555V583M52.5 563V582M56.5 567V581M60.5 571V599M64.5 563V597M68.5 534V580M72.5 511V545M76.5 458V530M80.5 452V473M84.5 451V471M88.5 430V471M92.5 415V444M96.5 430V445M100.5 438V446M104.5 439V449M108.5 437V450M112.5 426V444M116.5 433V444M120.5 438V448M124.5 440V446M128.5 439V446M132.5 439V458M136.5 425V456M140.5 428V454M144.5 403V451M148.5 409V428M152.5 422V443M156.5 398V442M160.5 383V419M164.5 375V407M168.5 398V432M172.5 408V434M176.5 415V428M180.5 414V427M184.5 413V428M188.5 409V421M192.5 415V435M196.5 358V403M200.5 335V371M204.5 347V368M208.5 350V368M212.5 356V364M216.5 353V365M220.5 358V366M224.5 360V365M228.5 353V364M232.5 360V384M236.5 373V391M240.5 343V375M244.5 338V368M248.5 298V339M252.5 299V318M256.5 296V317M260.5 306V333M264.5 300V332M268.5 305V329M272.5 321V334M276.5 322V343M280.5 325V336M284.5 328V338M288.5 327V336M292.5 328V340M296.5 337V373M300.5 346V373M304.5 338V359M308.5 305V387M312.5 280V327M316.5 299V324M320.5 298V310M324.5 283V311M328.5 286V340M332.5 297V325M336.5 281V322M340.5 314V352M344.5 332V375M348.5 359V370M352.5 345V368M356.5 322V353M360.5 303V353M364.5 297V319M368.5 305V328M372.5 310V333M376.5 309V330M380.5 323V345M384.5 322V344M388.5 335V348M392.5 324V344M396.5 323V345M400.5 338V361M404.5 350V363M408.5 338V360M412.5 337V350M416.5 331V350M420.5 330V340M424.5 310V342M428.5 309V348M432.5 339V357M436.5 334V348M440.5 333V354M444.5 318V358M448.5 328V356M452.5 328V348M456.5 330V360M460.5 306V337M464.5 314V330M468.5 318V328M472.5 314V333M476.5 322V333M480.5 319V333M484.5 318V337M488.5 317V328M492.5 317V334M496.5 323V342M500.5 312V328M504.5 311V320M508.5 308V318M512.5 313V318M516.5 293V317M520.5 285V304M524.5 265V300M528.5 230V274M532.5 246V268M536.5 261V281M540.5 273V288M544.5 265V283M548.5 273V303M552.5 254V291M556.5 255V269M560.5 248V270M564.5 233V258M568.5 231V244M572.5 199V238M576.5 195V207M580.5 191V207M584.5 198V207M588.5 198V208M592.5 193V207M596.5 198V208M600.5 200V208M604.5 198V206M608.5 198V210M612.5 198V215M616.5 188V208M620.5 176V200M624.5 173V188M628.5 167V190M632.5 154V186M636.5 147V165M640.5 151V170M644.5 115V169M648.5 97V129M652.5 100V115M656.5 102V114M660.5 86V113M664.5 106V126M668.5 106V117M672.5 106V127M676.5 94V122M680.5 102V117M684.5 104V127M688.5 110V120M692.5 113V130M696.5 116V124M700.5 115V125M704.5 122V128M708.5 125V142M712.5 108V135M716.5 111V155M720.5 134V154M724.5 143V177M728.5 158V177M732.5 168V184M736.5 170V196M740.5 182V203M744.5 154V191M748.5 158V179M752.5 157V191M756.5 160V188M760.5 172V184M764.5 159V179M768.5 172V184M772.5 175V180M776.5 164V180M780.5 156V173M784.5 159V173M788.5 155V165M792.5 144V165M796.5 135V151M800.5 130V144M804.5 121V137M808.5 126V152M812.5 110V133M816.5 123V145M820.5 122V147M824.5 125V138M828.5 115V134M832.5 115V138M836.5 130V156M840.5 135V184M844.5 104V152M848.5 117V129M852.5 109V130M856.5 114V129M860.5 102V117M864.5 101V117M868.5 107V122M872.5 93V116M876.5 93V105M880.5 98V107M884.5 88V100M888.5 90V100M892.5 87V98M896.5 87V105M900.5 97V107M904.5 92V115M908.5 104V124M912.5 110V120M916.5 94V148M920.5 127V150M924.5 116V137M928.5 120V139M932.5 106V134M936.5 113V227M940.5 180V228M944.5 200V226M948.5 209V240M952.5 221V239M956.5 231V258M960.5 242V256M964.5 239V255M968.5 243V255M972.5 236V249M976.5 226V243M980.5 229V242M984.5 229V240M988.5 222V238M992.5 216V230M996.5 223V241M1000.5 236V267M1004.5 230V268M1008.5 223V248M1012.5 224V255M1016.5 238V253M1020.5 236V272M1024.5 257V292M1028.5 249V282M1032.5 235V275M1036.5 235V257M1040.5 250V271M1044.5 255V272M1048.5 253V263M1052.5 254V271" stroke="#000" fill="none"/><path d="M3 507h3v7h-3zM7 513h3v5h-3zM11 518h3v13h-3zM15 530h3v7h-3zM19 536h3v13h-3zM27 543h3v13h-3zM35 550h3v18h-3zM43 551h3v21h-3zM51 566h3v6h-3zM55 571h3v4h-3zM59 574h3v15h-3zM79 464h3v5h-3zM83 469h3v2h-3zM91 433h3v4h-3zM95 436h3v8h-3zM99 440h3v3h-3zM103 442h3v4h-3zM115 435h3v5h-3zM119 440h3v3h-3zM123 443h3v1h-3zM131 441h3v16h-3zM139 430h3v20h-3zM147 415h3v12h-3zM151 426h3v7h-3zM163 400h3v1h-3zM167 399h3v10h-3zM171 408h3v15h-3zM179 419h3v6h-3zM187 415h3v1h-3zM191 416h3v14h-3zM207 353h3v10h-3zM211 362h3v2h-3zM219 359h3v4h-3zM223 362h3v1h-3zM227 362h3v1h-3zM231 362h3v16h-3zM255 303h3v11h-3zM259 313h3v18h-3zM267 305h3v21h-3zM271 325h3v8h-3zM279 327h3v8h-3zM283 333h3v3h-3zM291 332h3v7h-3zM295 340h3v26h-3zM303 348h3v11h-3zM327 290h3v31h-3zM335 299h3v22h-3zM339 320h3v23h-3zM343 342h3v26h-3zM355 348h3v2h-3zM363 308h3v10h-3zM367 318h3v7h-3zM371 328h3v1h-3zM375 328h3v1h-3zM379 327h3v6h-3zM383 331h3v12h-3zM387 341h3v2h-3zM395 326h3v14h-3zM399 340h3v13h-3zM403 352h3v6h-3zM411 339h3v9h-3zM427 314h3v33h-3zM439 334h3v19h-3zM447 332h3v4h-3zM451 334h3v13h-3zM463 323h3v5h-3zM471 321h3v7h-3zM475 328h3v1h-3zM479 327h3v1h-3zM483 323h3v2h-3zM491 318h3v11h-3zM503 314h3v1h-3zM507 314h3v1h-3zM511 314h3v1h-3zM519 294h3v6h-3zM531 247h3v16h-3zM535 263h3v17h-3zM539 279h3v1h-3zM547 277h3v14h-3zM555 259h3v6h-3zM567 238h3v1h-3zM575 200h3v2h-3zM583 199h3v2h-3zM587 199h3v2h-3zM591 201h3v2h-3zM595 202h3v4h-3zM599 205h3v1h-3zM607 203h3v3h-3zM623 177h3v5h-3zM627 181h3v4h-3zM635 160h3v2h-3zM639 161h3v2h-3zM651 109h3v2h-3zM655 110h3v1h-3zM663 108h3v7h-3zM671 107h3v17h-3zM683 107h3v7h-3zM687 113h3v4h-3zM691 116h3v8h-3zM695 120h3v3h-3zM699 122h3v2h-3zM703 124h3v3h-3zM707 126h3v3h-3zM715 113h3v34h-3zM719 146h3v1h-3zM723 146h3v24h-3zM727 169h3v6h-3zM731 173h3v2h-3zM735 173h3v12h-3zM739 184h3v5h-3zM751 162h3v2h-3zM755 160h3v22h-3zM763 177h3v1h-3zM767 176h3v4h-3zM771 178h3v1h-3zM779 163h3v10h-3zM787 160h3v5h-3zM803 130h3v2h-3zM811 130h3v2h-3zM815 127h3v9h-3zM831 121h3v14h-3zM835 135h3v9h-3zM839 138h3v11h-3zM847 120h3v2h-3zM851 120h3v3h-3zM863 110h3v7h-3zM867 114h3v1h-3zM875 95h3v6h-3zM879 99h3v2h-3zM887 92h3v3h-3zM895 90h3v15h-3zM903 99h3v14h-3zM907 112h3v6h-3zM915 112h3v18h-3zM919 129h3v2h-3zM923 130h3v6h-3zM935 118h3v79h-3zM939 196h3v20h-3zM943 215h3v1h-3zM947 215h3v13h-3zM951 227h3v6h-3zM955 233h3v16h-3zM959 249h3v1h-3zM967 248h3v1h-3zM983 236h3v1h-3zM991 226h3v2h-3zM995 227h3v13h-3zM999 240h3v16h-3zM1011 232h3v14h-3zM1019 244h3v20h-3zM1023 264h3v18h-3zM1035 240h3v14h-3zM1039 253h3v4h-3zM1043 256h3v5h-3zM1051 258h3v10h-3z" fill="#000"/><path d="M23.5 544.5h2v4h-2zM31.5 551.5h2v4h-2zM39.5 550.5h2v17h-2zM47.5 567.5h2v4h-2zM63.5 580.5h2v8h-2zM67.5 543.5h2v36h-2zM71.5 531.5h2v11h-2zM75.5 464.5h2v65h-2zM87.5 433.5h2v37h-2zM107.5 443.5h2v1h-2zM111.5 435.5h2v7h-2zM127.5 440.5h2v3h-2zM135.5 430.5h2v25h-2zM143.5 416.5h2v34h-2zM155.5 403.5h2v29h-2zM159.5 400.5h2v2h-2zM175.5 420.5h2v2h-2zM183.5 414.5h2v9h-2zM195.5 370.5h2v27h-2zM199.5 349.5h2v21h-2zM203.5 353.5h2v4h-2zM215.5 359.5h2v4h-2zM235.5 374.5h2v2h-2zM239.5 351.5h2v23h-2zM243.5 338.5h2v12h-2zM247.5 310.5h2v28h-2zM251.5 304.5h2v5h-2zM263.5 305.5h2v24h-2zM275.5 328.5h2v4h-2zM287.5 330.5h2v5h-2zM299.5 348.5h2v13h-2zM307.5 325.5h2v34h-2zM311.5 314.5h2v10h-2zM315.5 303.5h2v10h-2zM319.5 300.5h2v2h-2zM323.5 290.5h2v9h-2zM331.5 299.5h2v21h-2zM347.5 359.5h2v8h-2zM351.5 348.5h2v11h-2zM359.5 308.5h2v39h-2zM391.5 326.5h2v14h-2zM407.5 339.5h2v18h-2zM415.5 335.5h2v12h-2zM419.5 334.5h2v1h-2zM423.5 314.5h2v19h-2zM431.5 343.5h2v3h-2zM435.5 340.5h2v2h-2zM443.5 333.5h2v19h-2zM455.5 332.5h2v13h-2zM459.5 323.5h2v8h-2zM467.5 322.5h2v4h-2zM487.5 318.5h2v8h-2zM495.5 328.5h2v6h-2zM499.5 314.5h2v13h-2zM515.5 294.5h2v20h-2zM523.5 273.5h2v26h-2zM527.5 248.5h2v24h-2zM543.5 276.5h2v2h-2zM551.5 259.5h2v30h-2zM559.5 257.5h2v8h-2zM563.5 238.5h2v18h-2zM571.5 200.5h2v37h-2zM579.5 199.5h2v4h-2zM603.5 203.5h2v1h-2zM611.5 203.5h2v4h-2zM615.5 199.5h2v3h-2zM619.5 177.5h2v21h-2zM631.5 160.5h2v25h-2zM643.5 121.5h2v40h-2zM647.5 110.5h2v10h-2zM659.5 108.5h2v2h-2zM667.5 107.5h2v6h-2zM675.5 107.5h2v2h-2zM679.5 105.5h2v4h-2zM711.5 113.5h2v16h-2zM743.5 178.5h2v10h-2zM747.5 163.5h2v14h-2zM759.5 176.5h2v3h-2zM775.5 165.5h2v14h-2zM783.5 160.5h2v12h-2zM791.5 145.5h2v19h-2zM795.5 137.5h2v10h-2zM799.5 131.5h2v7h-2zM807.5 128.5h2v2h-2zM819.5 126.5h2v8h-2zM823.5 126.5h2v7h-2zM827.5 122.5h2v7h-2zM843.5 121.5h2v27h-2zM855.5 115.5h2v7h-2zM859.5 110.5h2v4h-2zM871.5 94.5h2v20h-2zM883.5 91.5h2v8h-2zM891.5 90.5h2v5h-2zM899.5 99.5h2v3h-2zM911.5 112.5h2v4h-2zM927.5 132.5h2v4h-2zM931.5 118.5h2v14h-2zM963.5 248.5h2v6h-2zM971.5 236.5h2v11h-2zM975.5 234.5h2v1h-2zM979.5 233.5h2v1h-2zM987.5 226.5h2v10h-2zM1003.5 238.5h2v17h-2zM1007.5 233.5h2v5h-2zM1015.5 244.5h2v1h-2zM1027.5 268.5h2v13h-2zM1031.5 240.5h2v27h-2zM1047.5 258.5h2v3h-2z" fill="#fff" stroke="#000"/></g><polyline points="5.0,479.5 14.4,500.0 19.6,507.6 25.0,516.6 32.5,525.0 40.8,534.0 50.0,545.4 57.5,553.7 63.5,559.0 68.3,560.2 71.8,560.5 78.6,553.0 84.7,543.8 90.7,531.7 96.8,518.0 101.7,508.5 108.3,490.7 114.6,476.9 121.3,461.8 128.0,446.8 131.4,444.2 139.8,441.3 150.3,439.3 156.9,436.8 162.8,430.1 168.6,425.1 177.0,422.6 185.3,420.9 192.0,419.2 197.0,413.4 202.8,405.0 210.4,398.4 218.7,390.0 226.9,383.5 233.6,377.7 240.2,370.2 245.2,361.8 250.3,353.5 256.9,350.1 263.6,345.9 268.6,342.6 275.3,335.9 282.0,331.8 288.6,328.4 294.3,331.0 299.3,338.0 303.0,339.3 310.5,334.3 316.7,331.8 325.0,330.1 333.4,328.4 350.1,327.6 363.4,326.8 371.8,328.4 383.5,331.0 393.5,332.6 403.5,333.4 413.5,336.0 420.2,336.8 433.6,337.6 447.0,337.6 457.0,336.0 465.3,332.6 475.3,333.4 487.0,332.6 497.0,330.1 505.3,326.8 513.7,323.4 516.7,321.0 533.4,306.8 546.7,293.5 556.8,280.1 566.8,270.1 571.8,260.1 578.5,250.1 585.1,243.4 593.5,233.4 600.2,225.0 608.5,216.7 616.9,208.3 621.8,203.0 630.1,198.0 638.5,193.9 645.1,185.5 650.2,175.5 656.8,162.1 663.5,150.4 670.2,140.4 676.9,132.1 683.5,124.6 690.2,117.9 695.2,114.6 701.9,113.7 708.6,115.4 713.6,118.7 720.3,123.7 726.9,130.4 733.6,137.1 740.3,145.4 747.0,152.1 753.7,158.0 758.7,162.1 763.7,168.8 768.7,173.8 773.7,177.0 780.4,176.5 788.4,174.7 795.1,168.8 803.4,160.5 811.8,153.8 820.1,148.8 828.5,140.4 840.2,135.4 848.5,132.1 856.9,129.6 868.5,126.2 875.2,121.2 881.9,115.4 888.6,110.4 895.3,105.4 901.9,102.9 908.6,103.7 915.3,105.0 923.6,107.9 932.0,112.0 937.0,118.7 942.0,128.7 947.0,140.4 952.0,152.1 957.0,163.8 960.1,175.0 965.1,183.3 970.2,195.0 975.2,206.7 980.2,215.9 985.2,225.1 990.2,231.8 996.9,235.9 1003.5,238.4 1010.2,239.3 1016.9,239.3 1021.9,240.9 1026.9,243.4 1031.9,245.1 1038.6,246.0 1043.6,248.5 1048.6,251.8 1052.0,254.3" fill="none" stroke="#a82222" stroke-width="1" stroke-linejoin="round" shape-rendering="crispEdges"/><polyline points="5.5,496.0 15.1,509.0 20.4,518.9 25.0,522.7 31.0,531.7 36.3,542.3 43.8,551.4 48.4,559.0 56.7,565.0 60.5,570.8 65.0,570.3 68.3,565.8 71.0,556.0 74.0,543.8 77.0,534.0 95.9,502.6 100.9,491.8 104.2,481.8 108.4,476.8 110.1,461.7 111.8,445.0 118.0,443.4 121.0,443.0 124.4,432.3 128.5,437.6 133.6,441.8 140.2,440.1 144.4,430.1 155.3,429.2 160.3,420.9 164.4,415.9 173.6,414.2 180.3,410.1 188.6,408.4 195.3,400.0 198.7,390.0 200.3,385.8 224.4,385.2 226.9,376.8 229.4,363.5 232.7,360.1 236.0,368.5 240.2,366.0 243.6,360.1 248.6,344.3 268.6,343.1 272.0,336.8 277.0,328.4 279.5,320.9 282.0,319.6 290.3,319.6 293.7,322.6 296.2,328.4 300.3,330.1 305.0,333.4 310.0,334.3 315.0,331.8 325.0,328.4 333.4,325.6 340.0,325.6 345.0,327.6 355.0,327.6 358.4,325.9 365.1,325.1 368.4,327.6 371.8,333.4 375.1,335.1 380.1,333.1 390.2,331.8 393.5,323.4 396.8,321.8 399.3,332.6 405.2,334.3 408.5,335.9 413.5,341.8 457.0,341.8 459.4,335.1 462.8,332.6 467.0,331.8 472.0,333.4 483.6,333.1 490.3,327.6 492.8,323.4 495.3,327.6 500.3,326.8 508.7,323.4 514.2,321.0 518.4,315.2 525.0,300.2 528.4,286.8 531.7,280.1 535.9,276.0 540.1,274.3 546.7,273.5 551.8,267.6 560.1,266.4 564.3,268.4 568.4,266.8 571.0,253.4 574.3,249.2 580.1,248.4 583.5,243.4 586.8,235.1 590.2,231.7 593.5,230.9 600.2,221.7 605.2,215.9 607.7,205.0 609.3,202.5 616.8,200.5 620.1,197.2 626.8,190.5 633.5,183.8 638.5,180.5 642.6,175.5 645.1,160.5 647.6,153.0 652.7,150.4 656.8,143.8 660.2,138.8 665.2,135.4 667.7,130.4 671.0,128.7 675.2,126.2 677.7,118.7 680.2,108.7 684.4,107.0 691.9,107.5 696.9,111.2 704.4,111.7 708.6,116.2 713.6,117.9 716.9,125.4 720.3,133.8 722.8,141.3 725.3,142.9 730.3,143.8 735.3,148.8 740.3,155.5 746.7,157.5 750.0,162.1 755.0,168.8 758.4,173.8 760.9,180.5 771.7,180.2 780.1,175.5 788.4,173.8 796.8,165.5 806.8,155.5 815.1,148.8 820.1,145.4 826.8,142.1 833.5,137.1 836.8,135.4 840.2,143.8 856.9,143.8 868.5,138.8 871.9,135.4 875.2,125.4 878.6,117.1 881.9,112.0 886.9,108.7 891.9,103.7 906.9,103.7 913.6,104.5 915.3,113.7 916.9,117.9 920.3,119.6 932.0,119.6 933.6,132.1 935.3,152.1 937.8,159.6 943.7,160.5 948.7,167.1 952.9,175.5 956.8,182.5 963.5,182.5 966.8,190.0 970.2,200.0 973.5,213.4 976.0,225.1 980.2,233.4 983.5,238.4 988.5,240.1 993.5,236.8 998.5,239.3 1003.5,241.8 1013.6,242.3 1018.6,242.6 1021.9,246.8 1025.2,251.8 1029.4,256.8 1043.6,257.1 1046.9,261.8 1052.0,263.5" fill="none" stroke="#cc2020" stroke-width="1" stroke-linejoin="round" shape-rendering="crispEdges"/><polyline points="5.5,455.5 12.5,458.0 17.5,462.0 20.5,472.0 32.5,473.2 37.5,479.5 43.7,484.5 53.7,489.5 60.0,498.7 64.2,505.1 68.3,516.8 72.5,529.3 76.7,529.3 85.0,524.3 88.4,514.3 92.6,506.8 140.1,506.5 144.3,501.0 153.5,499.8 157.7,496.8 163.5,486.8 168.5,475.1 171.9,461.7 176.0,453.4 178.5,438.4 180.5,425.0 188.5,422.5 193.7,415.9 197.8,405.0 200.3,396.7 238.6,396.0 244.4,393.5 246.9,383.5 248.6,371.0 260.3,365.5 292.0,365.5 293.7,360.1 297.8,346.8 300.3,343.1 308.7,341.8 311.7,334.8 408.5,334.3 411.9,327.6 436.9,327.6 440.2,334.3 453.0,334.3 456.1,329.3 464.4,329.3 467.0,333.4 512.9,333.4 517.0,326.8 522.0,320.1 524.5,310.1 528.4,296.0 555.9,295.5 560.1,286.8 568.1,286.0 570.1,276.8 572.6,269.3 575.1,268.1 596.8,267.3 600.2,262.6 605.2,257.6 612.7,256.4 616.9,251.8 620.2,240.9 628.5,235.1 633.6,227.5 640.2,225.0 643.6,214.2 645.2,205.8 646.8,203.0 653.5,192.2 660.2,178.8 666.8,167.1 671.9,162.1 675.2,153.8 676.9,150.9 712.8,150.9 716.1,147.9 721.1,146.3 724.4,138.8 730.3,137.9 732.8,136.3 735.3,138.8 740.3,145.9 760.9,145.9 765.0,150.1 771.7,150.1 780.1,153.8 788.4,158.0 840.2,158.8 841.8,150.4 844.3,147.9 856.9,146.3 860.2,143.4 868.5,142.1 873.6,137.9 883.6,136.3 890.3,135.4 932.8,135.1 934.5,140.4 937.0,155.5 940.3,157.1 944.5,158.0 947.8,163.0 952.9,163.8 956.2,172.1 996.0,172.5 1000.2,179.2 1006.9,181.7 1016.9,181.7 1020.2,188.4 1024.4,197.5 1026.9,198.4 1032.8,198.4 1036.1,202.5 1037.8,215.1 1039.4,225.1 1041.1,235.1 1044.4,243.4 1047.8,249.3 1052.0,252.6" fill="none" stroke="#00008b" stroke-width="1" stroke-linejoin="round" shape-rendering="crispEdges"/><g style="mix-blend-mode:difference"><path d="M212.0 489.8 L216.1 475.9 L225.3 475.1 L228.6 470.1 L232.8 473.8 L245.3 473.8 L248.6 465.4 L259.5 464.7 L263.7 457.6 L272.0 448.4 L277.0 436.7 L282.0 434.2 L284.3 417.6 L293.5 416.7 L298.5 407.6 L304.4 391.7 L329.4 391.4 L333.6 380.9 L336.9 379.7 L340.3 382.5 L347.8 380.0 L351.8 363.5 L356.8 357.6 L363.4 355.1 L371.8 354.3 L378.5 347.6 L383.5 344.3 L392.0 342.5 L399.6 339.0 L405.0 337.0 L414.0 335.0 L430.0 334.4 L455.0 334.4 L458.0 329.7 L470.0 330.0 L480.0 331.5 L501.6 332.5 L505.0 334.0 L508.7 334.0 L508.7 334.6 L505.3 336.8 L502.8 346.8 L501.2 356.5 L468.6 356.8 L465.3 360.1 L456.9 361.0 L453.6 363.5 L448.6 368.5 L416.9 370.2 L413.5 377.7 L400.2 379.3 L398.5 382.7 L390.2 383.5 L388.5 391.0 L387.0 395.0 L384.5 416.7 L380.3 421.8 L377.0 436.8 L373.6 446.0 L352.8 448.5 L348.6 466.5 L304.4 466.8 L301.9 476.8 L298.5 486.0 L270.1 486.9 L267.8 487.6 L262.0 493.5 L255.3 493.5 L252.0 489.8 L212.0 490.3ZM592.2 332.2 L596.4 328.9 L599.2 331.4 L605.4 331.0 L612.4 329.6 L617.3 329.6 L621.4 322.0 L625.6 317.8 L628.4 310.9 L630.5 302.5 L631.9 294.2 L632.7 290.2 L638.6 286.0 L650.3 285.1 L655.3 282.6 L660.3 279.3 L666.9 277.1 L672.8 276.8 L674.5 266.8 L676.1 260.9 L680.3 258.4 L685.3 258.1 L692.0 250.1 L700.3 248.4 L705.3 238.4 L712.0 230.9 L718.7 229.7 L723.7 220.0 L728.0 215.9 L731.0 215.1 L736.8 206.7 L743.5 203.4 L745.3 203.0 L748.6 190.5 L753.7 175.5 L758.7 165.5 L764.5 158.8 L768.7 150.4 L775.4 145.4 L778.7 138.8 L782.0 132.1 L785.1 129.6 L796.8 129.2 L800.1 132.1 L811.8 132.1 L818.5 137.1 L826.8 140.4 L833.5 145.4 L838.5 148.8 L841.8 153.0 L850.2 152.1 L855.2 155.5 L856.9 158.8 L863.5 162.1 L868.5 165.5 L874.4 165.5 L874.4 165.8 L871.9 170.5 L868.5 177.2 L865.2 180.5 L862.0 186.7 L857.0 194.2 L828.6 195.0 L823.6 201.7 L812.8 203.4 L808.6 208.4 L805.3 214.2 L767.7 215.1 L764.4 221.7 L760.2 227.6 L753.5 228.4 L750.2 230.1 L746.8 241.8 L745.2 252.6 L741.0 253.5 L738.5 256.0 L735.2 261.8 L728.5 265.1 L723.5 271.0 L718.5 276.5 L677.1 276.8 L676.1 278.5 L674.5 285.1 L672.2 295.4 L663.8 297.0 L656.9 299.0 L654.1 301.8 L631.9 301.8 L631.2 305.3 L629.1 316.4 L627.0 323.4 L622.1 326.2 L619.3 328.9 L617.3 332.9 L592.2 333.2ZM960.0 144.6 L966.3 143.0 L972.5 139.8 L977.5 132.3 L983.8 124.8 L990.0 121.8 L995.0 119.8 L1012.5 119.8 L1017.5 123.5 L1020.0 127.3 L1036.3 128.0 L1037.5 146.0 L1038.0 151.0 L1038.0 151.5 L1035.0 146.0 L992.5 146.0 L986.3 148.5 L970.0 148.5 L960.0 145.5ZM508.7 333.4 L515.7 333.4 L515.7 334.6 L508.7 334.6ZM524.8 334.6 L528.2 331.4 L539.4 331.4 L542.9 334.6ZM560.2 332.6 L565.1 331.0 L570.7 332.6ZM915.0 150.0 L921.0 150.0 L921.0 151.2 L915.0 151.2ZM928.6 144.8 L939.5 144.8 L939.5 146.3 L928.6 146.3Z" fill="#0b5b9f"/><path d="M4.5 390.3 L68.3 390.3 L69.9 395.9 L72.0 403.0 L73.7 404.7 L77.9 406.4 L79.6 410.1 L83.8 413.9 L87.1 420.2 L88.8 426.9 L91.0 430.1 L96.0 437.6 L100.2 440.9 L106.8 445.1 L113.5 446.8 L119.4 453.5 L122.5 461.0 L136.0 461.0 L141.0 466.3 L146.0 472.0 L158.0 473.3 L165.5 478.4 L172.0 483.5 L178.0 489.3 L212.0 489.5 L211.1 490.3 L206.9 496.0 L201.9 503.5 L196.9 508.5 L190.2 518.5 L183.5 526.8 L179.4 535.2 L175.2 541.0 L170.2 538.5 L165.2 533.5 L160.2 526.8 L153.5 521.0 L148.5 516.8 L143.5 511.8 L138.5 505.1 L133.5 500.1 L126.8 495.1 L123.4 486.8 L116.8 482.6 L111.8 475.1 L105.1 470.1 L100.1 462.6 L93.4 455.1 L85.0 450.0 L78.4 445.0 L72.5 438.4 L70.0 432.0 L68.3 423.0 L67.0 418.5 L64.5 416.8 L60.3 424.0 L39.4 424.4 L36.9 434.0 L31.0 437.0 L27.6 439.4 L21.8 440.3 L16.7 438.6 L10.9 435.2 L4.5 431.5ZM1040.0 157.0 L1050.0 158.3 L1055.0 164.5 L1060.0 172.3 L1097.5 172.5 L1105.0 177.5 L1120.0 178.0 L1126.3 183.8 L1127.5 189.5 L1156.0 189.5 L1156.0 257.5 L1155.0 257.5 L1145.0 247.5 L1141.3 235.0 L1140.0 228.8 L1127.5 225.0 L1123.8 213.8 L1120.0 210.0 L1105.0 210.0 L1100.0 205.0 L1080.0 203.8 L1075.0 197.5 L1072.5 182.5 L1062.5 176.3 L1060.0 173.5 L1055.0 165.5 L1050.0 159.2 L1040.0 157.8ZM879.4 162.1 L881.0 160.5 L885.2 151.3 L913.6 151.3 L915.3 151.5 L912.0 153.0 L905.3 155.5 L898.6 158.8 L892.8 164.6 L886.9 163.8 L881.1 161.0ZM941.0 146.3 L947.5 146.3 L944.2 150.6Z" fill="#274027"/></g><g shape-rendering="crispEdges"><g clip-path="url(#cpP)"><path d="M4 86.5H1311M4 119.5H1311M4 151.5H1311M4 182.5H1311M4 215.5H1311M4 246.5H1311M4 279.5H1311M4 311.5H1311M4 342.5H1311M4 375.5H1311M4 406.5H1311M4 439.5H1311M4 470.5H1311M4 502.5H1311M4 535.5H1311M4 566.5H1311M4 599.5H1311M4 630.5H1311M36.5 77V661M68.5 77V661M132.5 77V661M164.5 77V661M228.5 77V661M260.5 77V661M324.5 77V661M356.5 77V661M420.5 77V661M452.5 77V661M516.5 77V661M548.5 77V661M612.5 77V661M644.5 77V661M708.5 77V661M740.5 77V661M804.5 77V661M836.5 77V661M900.5 77V661M932.5 77V661M996.5 77V661M1028.5 77V661M1092.5 77V661M1124.5 77V661M1156.5 77V661M1188.5 77V661M1220.5 77V661M1252.5 77V661M1284.5 77V661" stroke="#e99ae9" stroke-dasharray="3 3" stroke-dashoffset="0" fill="none"/></g><g clip-path="url(#cpP)"><path d="M100.5 77V661M196.5 77V661M292.5 77V661M388.5 77V661M484.5 77V661M580.5 77V661M676.5 77V661M772.5 77V661M868.5 77V661M964.5 77V661M1060.5 77V661" stroke="#1a2a1a" stroke-dasharray="3 3" fill="none"/><path d="M24 545h1v3h-1zM32 552h1v3h-1zM40 551h1v16h-1zM48 568h1v3h-1zM64 581h1v7h-1zM68 544h1v35h-1zM72 532h1v10h-1zM76 465h1v64h-1zM88 434h1v36h-1zM112 436h1v6h-1zM128 441h1v2h-1zM136 431h1v24h-1zM144 417h1v33h-1zM156 404h1v28h-1zM160 401h1v1h-1zM176 421h1v1h-1zM184 415h1v8h-1zM196 371h1v26h-1zM200 350h1v20h-1zM204 354h1v3h-1zM216 360h1v3h-1zM236 375h1v1h-1zM240 352h1v22h-1zM244 339h1v11h-1zM248 311h1v27h-1zM252 305h1v4h-1zM264 306h1v23h-1zM276 329h1v3h-1zM288 331h1v4h-1zM300 349h1v12h-1zM308 326h1v33h-1zM312 315h1v9h-1zM316 304h1v9h-1zM320 301h1v1h-1zM324 291h1v8h-1zM332 300h1v20h-1zM348 360h1v7h-1zM352 349h1v10h-1zM360 309h1v38h-1zM392 327h1v13h-1zM408 340h1v17h-1zM416 336h1v11h-1zM424 315h1v18h-1zM432 344h1v2h-1zM436 341h1v1h-1zM444 334h1v18h-1zM456 333h1v12h-1zM460 324h1v7h-1zM468 323h1v3h-1zM488 319h1v7h-1zM496 329h1v5h-1zM500 315h1v12h-1zM516 295h1v19h-1zM524 274h1v25h-1zM528 249h1v23h-1zM544 277h1v1h-1zM552 260h1v29h-1zM560 258h1v7h-1zM564 239h1v17h-1zM572 201h1v36h-1zM580 200h1v3h-1zM612 204h1v3h-1zM616 200h1v2h-1zM620 178h1v20h-1zM632 161h1v24h-1zM644 122h1v39h-1zM648 111h1v9h-1zM660 109h1v1h-1zM668 108h1v5h-1zM676 108h1v1h-1zM680 106h1v3h-1zM712 114h1v15h-1zM744 179h1v9h-1zM748 164h1v13h-1zM760 177h1v2h-1zM776 166h1v13h-1zM784 161h1v11h-1zM792 146h1v18h-1zM796 138h1v9h-1zM800 132h1v6h-1zM808 129h1v1h-1zM820 127h1v7h-1zM824 127h1v6h-1zM828 123h1v6h-1zM844 122h1v26h-1zM856 116h1v6h-1zM860 111h1v3h-1zM872 95h1v19h-1zM884 92h1v7h-1zM892 91h1v4h-1zM900 100h1v2h-1zM912 113h1v3h-1zM928 133h1v3h-1zM932 119h1v13h-1zM964 249h1v5h-1zM972 237h1v10h-1zM988 227h1v9h-1zM1004 239h1v16h-1zM1008 234h1v4h-1zM1028 269h1v12h-1zM1032 241h1v26h-1zM1048 259h1v2h-1z" fill="#e6e6e6"/></g><g clip-path="url(#cpO)"><path d="M100.5 77V661M196.5 77V661M292.5 77V661M388.5 77V661M484.5 77V661M580.5 77V661M676.5 77V661M772.5 77V661M868.5 77V661M964.5 77V661M1060.5 77V661" stroke="#1c2c44" stroke-dasharray="3 3" fill="none"/><path d="M24 545h1v3h-1zM32 552h1v3h-1zM40 551h1v16h-1zM48 568h1v3h-1zM64 581h1v7h-1zM68 544h1v35h-1zM72 532h1v10h-1zM76 465h1v64h-1zM88 434h1v36h-1zM112 436h1v6h-1zM128 441h1v2h-1zM136 431h1v24h-1zM144 417h1v33h-1zM156 404h1v28h-1zM160 401h1v1h-1zM176 421h1v1h-1zM184 415h1v8h-1zM196 371h1v26h-1zM200 350h1v20h-1zM204 354h1v3h-1zM216 360h1v3h-1zM236 375h1v1h-1zM240 352h1v22h-1zM244 339h1v11h-1zM248 311h1v27h-1zM252 305h1v4h-1zM264 306h1v23h-1zM276 329h1v3h-1zM288 331h1v4h-1zM300 349h1v12h-1zM308 326h1v33h-1zM312 315h1v9h-1zM316 304h1v9h-1zM320 301h1v1h-1zM324 291h1v8h-1zM332 300h1v20h-1zM348 360h1v7h-1zM352 349h1v10h-1zM360 309h1v38h-1zM392 327h1v13h-1zM408 340h1v17h-1zM416 336h1v11h-1zM424 315h1v18h-1zM432 344h1v2h-1zM436 341h1v1h-1zM444 334h1v18h-1zM456 333h1v12h-1zM460 324h1v7h-1zM468 323h1v3h-1zM488 319h1v7h-1zM496 329h1v5h-1zM500 315h1v12h-1zM516 295h1v19h-1zM524 274h1v25h-1zM528 249h1v23h-1zM544 277h1v1h-1zM552 260h1v29h-1zM560 258h1v7h-1zM564 239h1v17h-1zM572 201h1v36h-1zM580 200h1v3h-1zM612 204h1v3h-1zM616 200h1v2h-1zM620 178h1v20h-1zM632 161h1v24h-1zM644 122h1v39h-1zM648 111h1v9h-1zM660 109h1v1h-1zM668 108h1v5h-1zM676 108h1v1h-1zM680 106h1v3h-1zM712 114h1v15h-1zM744 179h1v9h-1zM748 164h1v13h-1zM760 177h1v2h-1zM776 166h1v13h-1zM784 161h1v11h-1zM792 146h1v18h-1zM796 138h1v9h-1zM800 132h1v6h-1zM808 129h1v1h-1zM820 127h1v7h-1zM824 127h1v6h-1zM828 123h1v6h-1zM844 122h1v26h-1zM856 116h1v6h-1zM860 111h1v3h-1zM872 95h1v19h-1zM884 92h1v7h-1zM892 91h1v4h-1zM900 100h1v2h-1zM912 113h1v3h-1zM928 133h1v3h-1zM932 119h1v13h-1zM964 249h1v5h-1zM972 237h1v10h-1zM988 227h1v9h-1zM1004 239h1v16h-1zM1008 234h1v4h-1zM1028 269h1v12h-1zM1032 241h1v26h-1zM1048 259h1v2h-1z" fill="#e0e0e0"/></g></g><g clip-path="url(#cpO)"><polyline points="5.0,479.5 14.4,500.0 19.6,507.6 25.0,516.6 32.5,525.0 40.8,534.0 50.0,545.4 57.5,553.7 63.5,559.0 68.3,560.2 71.8,560.5 78.6,553.0 84.7,543.8 90.7,531.7 96.8,518.0 101.7,508.5 108.3,490.7 114.6,476.9 121.3,461.8 128.0,446.8 131.4,444.2 139.8,441.3 150.3,439.3 156.9,436.8 162.8,430.1 168.6,425.1 177.0,422.6 185.3,420.9 192.0,419.2 197.0,413.4 202.8,405.0 210.4,398.4 218.7,390.0 226.9,383.5 233.6,377.7 240.2,370.2 245.2,361.8 250.3,353.5 256.9,350.1 263.6,345.9 268.6,342.6 275.3,335.9 282.0,331.8 288.6,328.4 294.3,331.0 299.3,338.0 303.0,339.3 310.5,334.3 316.7,331.8 325.0,330.1 333.4,328.4 350.1,327.6 363.4,326.8 371.8,328.4 383.5,331.0 393.5,332.6 403.5,333.4 413.5,336.0 420.2,336.8 433.6,337.6 447.0,337.6 457.0,336.0 465.3,332.6 475.3,333.4 487.0,332.6 497.0,330.1 505.3,326.8 513.7,323.4 516.7,321.0 533.4,306.8 546.7,293.5 556.8,280.1 566.8,270.1 571.8,260.1 578.5,250.1 585.1,243.4 593.5,233.4 600.2,225.0 608.5,216.7 616.9,208.3 621.8,203.0 630.1,198.0 638.5,193.9 645.1,185.5 650.2,175.5 656.8,162.1 663.5,150.4 670.2,140.4 676.9,132.1 683.5,124.6 690.2,117.9 695.2,114.6 701.9,113.7 708.6,115.4 713.6,118.7 720.3,123.7 726.9,130.4 733.6,137.1 740.3,145.4 747.0,152.1 753.7,158.0 758.7,162.1 763.7,168.8 768.7,173.8 773.7,177.0 780.4,176.5 788.4,174.7 795.1,168.8 803.4,160.5 811.8,153.8 820.1,148.8 828.5,140.4 840.2,135.4 848.5,132.1 856.9,129.6 868.5,126.2 875.2,121.2 881.9,115.4 888.6,110.4 895.3,105.4 901.9,102.9 908.6,103.7 915.3,105.0 923.6,107.9 932.0,112.0 937.0,118.7 942.0,128.7 947.0,140.4 952.0,152.1 957.0,163.8 960.1,175.0 965.1,183.3 970.2,195.0 975.2,206.7 980.2,215.9 985.2,225.1 990.2,231.8 996.9,235.9 1003.5,238.4 1010.2,239.3 1016.9,239.3 1021.9,240.9 1026.9,243.4 1031.9,245.1 1038.6,246.0 1043.6,248.5 1048.6,251.8 1052.0,254.3" fill="none" stroke="#ee8fb4" stroke-width="1" stroke-linejoin="round" shape-rendering="crispEdges"/><polyline points="5.5,496.0 15.1,509.0 20.4,518.9 25.0,522.7 31.0,531.7 36.3,542.3 43.8,551.4 48.4,559.0 56.7,565.0 60.5,570.8 65.0,570.3 68.3,565.8 71.0,556.0 74.0,543.8 77.0,534.0 95.9,502.6 100.9,491.8 104.2,481.8 108.4,476.8 110.1,461.7 111.8,445.0 118.0,443.4 121.0,443.0 124.4,432.3 128.5,437.6 133.6,441.8 140.2,440.1 144.4,430.1 155.3,429.2 160.3,420.9 164.4,415.9 173.6,414.2 180.3,410.1 188.6,408.4 195.3,400.0 198.7,390.0 200.3,385.8 224.4,385.2 226.9,376.8 229.4,363.5 232.7,360.1 236.0,368.5 240.2,366.0 243.6,360.1 248.6,344.3 268.6,343.1 272.0,336.8 277.0,328.4 279.5,320.9 282.0,319.6 290.3,319.6 293.7,322.6 296.2,328.4 300.3,330.1 305.0,333.4 310.0,334.3 315.0,331.8 325.0,328.4 333.4,325.6 340.0,325.6 345.0,327.6 355.0,327.6 358.4,325.9 365.1,325.1 368.4,327.6 371.8,333.4 375.1,335.1 380.1,333.1 390.2,331.8 393.5,323.4 396.8,321.8 399.3,332.6 405.2,334.3 408.5,335.9 413.5,341.8 457.0,341.8 459.4,335.1 462.8,332.6 467.0,331.8 472.0,333.4 483.6,333.1 490.3,327.6 492.8,323.4 495.3,327.6 500.3,326.8 508.7,323.4 514.2,321.0 518.4,315.2 525.0,300.2 528.4,286.8 531.7,280.1 535.9,276.0 540.1,274.3 546.7,273.5 551.8,267.6 560.1,266.4 564.3,268.4 568.4,266.8 571.0,253.4 574.3,249.2 580.1,248.4 583.5,243.4 586.8,235.1 590.2,231.7 593.5,230.9 600.2,221.7 605.2,215.9 607.7,205.0 609.3,202.5 616.8,200.5 620.1,197.2 626.8,190.5 633.5,183.8 638.5,180.5 642.6,175.5 645.1,160.5 647.6,153.0 652.7,150.4 656.8,143.8 660.2,138.8 665.2,135.4 667.7,130.4 671.0,128.7 675.2,126.2 677.7,118.7 680.2,108.7 684.4,107.0 691.9,107.5 696.9,111.2 704.4,111.7 708.6,116.2 713.6,117.9 716.9,125.4 720.3,133.8 722.8,141.3 725.3,142.9 730.3,143.8 735.3,148.8 740.3,155.5 746.7,157.5 750.0,162.1 755.0,168.8 758.4,173.8 760.9,180.5 771.7,180.2 780.1,175.5 788.4,173.8 796.8,165.5 806.8,155.5 815.1,148.8 820.1,145.4 826.8,142.1 833.5,137.1 836.8,135.4 840.2,143.8 856.9,143.8 868.5,138.8 871.9,135.4 875.2,125.4 878.6,117.1 881.9,112.0 886.9,108.7 891.9,103.7 906.9,103.7 913.6,104.5 915.3,113.7 916.9,117.9 920.3,119.6 932.0,119.6 933.6,132.1 935.3,152.1 937.8,159.6 943.7,160.5 948.7,167.1 952.9,175.5 956.8,182.5 963.5,182.5 966.8,190.0 970.2,200.0 973.5,213.4 976.0,225.1 980.2,233.4 983.5,238.4 988.5,240.1 993.5,236.8 998.5,239.3 1003.5,241.8 1013.6,242.3 1018.6,242.6 1021.9,246.8 1025.2,251.8 1029.4,256.8 1043.6,257.1 1046.9,261.8 1052.0,263.5" fill="none" stroke="#f77fb2" stroke-width="1" stroke-linejoin="round" shape-rendering="crispEdges"/><polyline points="5.5,455.5 12.5,458.0 17.5,462.0 20.5,472.0 32.5,473.2 37.5,479.5 43.7,484.5 53.7,489.5 60.0,498.7 64.2,505.1 68.3,516.8 72.5,529.3 76.7,529.3 85.0,524.3 88.4,514.3 92.6,506.8 140.1,506.5 144.3,501.0 153.5,499.8 157.7,496.8 163.5,486.8 168.5,475.1 171.9,461.7 176.0,453.4 178.5,438.4 180.5,425.0 188.5,422.5 193.7,415.9 197.8,405.0 200.3,396.7 238.6,396.0 244.4,393.5 246.9,383.5 248.6,371.0 260.3,365.5 292.0,365.5 293.7,360.1 297.8,346.8 300.3,343.1 308.7,341.8 311.7,334.8 408.5,334.3 411.9,327.6 436.9,327.6 440.2,334.3 453.0,334.3 456.1,329.3 464.4,329.3 467.0,333.4 512.9,333.4 517.0,326.8 522.0,320.1 524.5,310.1 528.4,296.0 555.9,295.5 560.1,286.8 568.1,286.0 570.1,276.8 572.6,269.3 575.1,268.1 596.8,267.3 600.2,262.6 605.2,257.6 612.7,256.4 616.9,251.8 620.2,240.9 628.5,235.1 633.6,227.5 640.2,225.0 643.6,214.2 645.2,205.8 646.8,203.0 653.5,192.2 660.2,178.8 666.8,167.1 671.9,162.1 675.2,153.8 676.9,150.9 712.8,150.9 716.1,147.9 721.1,146.3 724.4,138.8 730.3,137.9 732.8,136.3 735.3,138.8 740.3,145.9 760.9,145.9 765.0,150.1 771.7,150.1 780.1,153.8 788.4,158.0 840.2,158.8 841.8,150.4 844.3,147.9 856.9,146.3 860.2,143.4 868.5,142.1 873.6,137.9 883.6,136.3 890.3,135.4 932.8,135.1 934.5,140.4 937.0,155.5 940.3,157.1 944.5,158.0 947.8,163.0 952.9,163.8 956.2,172.1 996.0,172.5 1000.2,179.2 1006.9,181.7 1016.9,181.7 1020.2,188.4 1024.4,197.5 1026.9,198.4 1032.8,198.4 1036.1,202.5 1037.8,215.1 1039.4,225.1 1041.1,235.1 1044.4,243.4 1047.8,249.3 1052.0,252.6" fill="none" stroke="#1d5226" stroke-width="1" stroke-linejoin="round" shape-rendering="crispEdges"/></g><g clip-path="url(#cpP)"><polyline points="5.0,479.5 14.4,500.0 19.6,507.6 25.0,516.6 32.5,525.0 40.8,534.0 50.0,545.4 57.5,553.7 63.5,559.0 68.3,560.2 71.8,560.5 78.6,553.0 84.7,543.8 90.7,531.7 96.8,518.0 101.7,508.5 108.3,490.7 114.6,476.9 121.3,461.8 128.0,446.8 131.4,444.2 139.8,441.3 150.3,439.3 156.9,436.8 162.8,430.1 168.6,425.1 177.0,422.6 185.3,420.9 192.0,419.2 197.0,413.4 202.8,405.0 210.4,398.4 218.7,390.0 226.9,383.5 233.6,377.7 240.2,370.2 245.2,361.8 250.3,353.5 256.9,350.1 263.6,345.9 268.6,342.6 275.3,335.9 282.0,331.8 288.6,328.4 294.3,331.0 299.3,338.0 303.0,339.3 310.5,334.3 316.7,331.8 325.0,330.1 333.4,328.4 350.1,327.6 363.4,326.8 371.8,328.4 383.5,331.0 393.5,332.6 403.5,333.4 413.5,336.0 420.2,336.8 433.6,337.6 447.0,337.6 457.0,336.0 465.3,332.6 475.3,333.4 487.0,332.6 497.0,330.1 505.3,326.8 513.7,323.4 516.7,321.0 533.4,306.8 546.7,293.5 556.8,280.1 566.8,270.1 571.8,260.1 578.5,250.1 585.1,243.4 593.5,233.4 600.2,225.0 608.5,216.7 616.9,208.3 621.8,203.0 630.1,198.0 638.5,193.9 645.1,185.5 650.2,175.5 656.8,162.1 663.5,150.4 670.2,140.4 676.9,132.1 683.5,124.6 690.2,117.9 695.2,114.6 701.9,113.7 708.6,115.4 713.6,118.7 720.3,123.7 726.9,130.4 733.6,137.1 740.3,145.4 747.0,152.1 753.7,158.0 758.7,162.1 763.7,168.8 768.7,173.8 773.7,177.0 780.4,176.5 788.4,174.7 795.1,168.8 803.4,160.5 811.8,153.8 820.1,148.8 828.5,140.4 840.2,135.4 848.5,132.1 856.9,129.6 868.5,126.2 875.2,121.2 881.9,115.4 888.6,110.4 895.3,105.4 901.9,102.9 908.6,103.7 915.3,105.0 923.6,107.9 932.0,112.0 937.0,118.7 942.0,128.7 947.0,140.4 952.0,152.1 957.0,163.8 960.1,175.0 965.1,183.3 970.2,195.0 975.2,206.7 980.2,215.9 985.2,225.1 990.2,231.8 996.9,235.9 1003.5,238.4 1010.2,239.3 1016.9,239.3 1021.9,240.9 1026.9,243.4 1031.9,245.1 1038.6,246.0 1043.6,248.5 1048.6,251.8 1052.0,254.3" fill="none" stroke="#ee8fb4" stroke-width="1" stroke-linejoin="round" shape-rendering="crispEdges"/><polyline points="5.5,496.0 15.1,509.0 20.4,518.9 25.0,522.7 31.0,531.7 36.3,542.3 43.8,551.4 48.4,559.0 56.7,565.0 60.5,570.8 65.0,570.3 68.3,565.8 71.0,556.0 74.0,543.8 77.0,534.0 95.9,502.6 100.9,491.8 104.2,481.8 108.4,476.8 110.1,461.7 111.8,445.0 118.0,443.4 121.0,443.0 124.4,432.3 128.5,437.6 133.6,441.8 140.2,440.1 144.4,430.1 155.3,429.2 160.3,420.9 164.4,415.9 173.6,414.2 180.3,410.1 188.6,408.4 195.3,400.0 198.7,390.0 200.3,385.8 224.4,385.2 226.9,376.8 229.4,363.5 232.7,360.1 236.0,368.5 240.2,366.0 243.6,360.1 248.6,344.3 268.6,343.1 272.0,336.8 277.0,328.4 279.5,320.9 282.0,319.6 290.3,319.6 293.7,322.6 296.2,328.4 300.3,330.1 305.0,333.4 310.0,334.3 315.0,331.8 325.0,328.4 333.4,325.6 340.0,325.6 345.0,327.6 355.0,327.6 358.4,325.9 365.1,325.1 368.4,327.6 371.8,333.4 375.1,335.1 380.1,333.1 390.2,331.8 393.5,323.4 396.8,321.8 399.3,332.6 405.2,334.3 408.5,335.9 413.5,341.8 457.0,341.8 459.4,335.1 462.8,332.6 467.0,331.8 472.0,333.4 483.6,333.1 490.3,327.6 492.8,323.4 495.3,327.6 500.3,326.8 508.7,323.4 514.2,321.0 518.4,315.2 525.0,300.2 528.4,286.8 531.7,280.1 535.9,276.0 540.1,274.3 546.7,273.5 551.8,267.6 560.1,266.4 564.3,268.4 568.4,266.8 571.0,253.4 574.3,249.2 580.1,248.4 583.5,243.4 586.8,235.1 590.2,231.7 593.5,230.9 600.2,221.7 605.2,215.9 607.7,205.0 609.3,202.5 616.8,200.5 620.1,197.2 626.8,190.5 633.5,183.8 638.5,180.5 642.6,175.5 645.1,160.5 647.6,153.0 652.7,150.4 656.8,143.8 660.2,138.8 665.2,135.4 667.7,130.4 671.0,128.7 675.2,126.2 677.7,118.7 680.2,108.7 684.4,107.0 691.9,107.5 696.9,111.2 704.4,111.7 708.6,116.2 713.6,117.9 716.9,125.4 720.3,133.8 722.8,141.3 725.3,142.9 730.3,143.8 735.3,148.8 740.3,155.5 746.7,157.5 750.0,162.1 755.0,168.8 758.4,173.8 760.9,180.5 771.7,180.2 780.1,175.5 788.4,173.8 796.8,165.5 806.8,155.5 815.1,148.8 820.1,145.4 826.8,142.1 833.5,137.1 836.8,135.4 840.2,143.8 856.9,143.8 868.5,138.8 871.9,135.4 875.2,125.4 878.6,117.1 881.9,112.0 886.9,108.7 891.9,103.7 906.9,103.7 913.6,104.5 915.3,113.7 916.9,117.9 920.3,119.6 932.0,119.6 933.6,132.1 935.3,152.1 937.8,159.6 943.7,160.5 948.7,167.1 952.9,175.5 956.8,182.5 963.5,182.5 966.8,190.0 970.2,200.0 973.5,213.4 976.0,225.1 980.2,233.4 983.5,238.4 988.5,240.1 993.5,236.8 998.5,239.3 1003.5,241.8 1013.6,242.3 1018.6,242.6 1021.9,246.8 1025.2,251.8 1029.4,256.8 1043.6,257.1 1046.9,261.8 1052.0,263.5" fill="none" stroke="#f77fb2" stroke-width="1" stroke-linejoin="round" shape-rendering="crispEdges"/><polyline points="5.5,455.5 12.5,458.0 17.5,462.0 20.5,472.0 32.5,473.2 37.5,479.5 43.7,484.5 53.7,489.5 60.0,498.7 64.2,505.1 68.3,516.8 72.5,529.3 76.7,529.3 85.0,524.3 88.4,514.3 92.6,506.8 140.1,506.5 144.3,501.0 153.5,499.8 157.7,496.8 163.5,486.8 168.5,475.1 171.9,461.7 176.0,453.4 178.5,438.4 180.5,425.0 188.5,422.5 193.7,415.9 197.8,405.0 200.3,396.7 238.6,396.0 244.4,393.5 246.9,383.5 248.6,371.0 260.3,365.5 292.0,365.5 293.7,360.1 297.8,346.8 300.3,343.1 308.7,341.8 311.7,334.8 408.5,334.3 411.9,327.6 436.9,327.6 440.2,334.3 453.0,334.3 456.1,329.3 464.4,329.3 467.0,333.4 512.9,333.4 517.0,326.8 522.0,320.1 524.5,310.1 528.4,296.0 555.9,295.5 560.1,286.8 568.1,286.0 570.1,276.8 572.6,269.3 575.1,268.1 596.8,267.3 600.2,262.6 605.2,257.6 612.7,256.4 616.9,251.8 620.2,240.9 628.5,235.1 633.6,227.5 640.2,225.0 643.6,214.2 645.2,205.8 646.8,203.0 653.5,192.2 660.2,178.8 666.8,167.1 671.9,162.1 675.2,153.8 676.9,150.9 712.8,150.9 716.1,147.9 721.1,146.3 724.4,138.8 730.3,137.9 732.8,136.3 735.3,138.8 740.3,145.9 760.9,145.9 765.0,150.1 771.7,150.1 780.1,153.8 788.4,158.0 840.2,158.8 841.8,150.4 844.3,147.9 856.9,146.3 860.2,143.4 868.5,142.1 873.6,137.9 883.6,136.3 890.3,135.4 932.8,135.1 934.5,140.4 937.0,155.5 940.3,157.1 944.5,158.0 947.8,163.0 952.9,163.8 956.2,172.1 996.0,172.5 1000.2,179.2 1006.9,181.7 1016.9,181.7 1020.2,188.4 1024.4,197.5 1026.9,198.4 1032.8,198.4 1036.1,202.5 1037.8,215.1 1039.4,225.1 1041.1,235.1 1044.4,243.4 1047.8,249.3 1052.0,252.6" fill="none" stroke="#2a5a2a" stroke-width="1" stroke-linejoin="round" shape-rendering="crispEdges"/></g><polyline points="4.5,441.0 8.5,435.3 12.5,440.0 16.5,443.0 20.5,442.8 24.5,440.3 28.5,455.0 32.5,430.6 36.5,450.0 40.5,417.2 44.5,425.0 48.5,433.2 52.5,403.8 56.5,400.5 60.5,398.8 64.5,406.0 68.5,421.0 72.5,420.2 76.5,425.2 80.5,415.0 84.5,414.5 88.5,428.0 92.5,383.0 96.5,350.0 100.5,354.3 104.5,359.3 108.5,364.3 112.5,359.8 116.5,363.1 120.5,363.5 124.5,362.1 128.5,377.7 132.5,375.2 136.5,353.5 140.5,336.8 144.5,310.9 148.5,303.4 152.5,312.6 156.5,330.1 160.5,305.0 164.5,320.1 168.5,333.1 172.5,327.6 176.5,334.3 180.5,335.9 184.5,333.4 188.5,340.1 192.5,365.1 196.5,350.1 200.5,357.6 204.5,323.4 208.5,311.7 212.5,302.5 216.5,297.5 220.5,290.4 224.5,320.1 228.5,299.7 232.5,318.4 236.5,340.1 240.5,366.8 244.5,351.8 248.5,347.6 252.5,349.8 256.5,308.4 260.5,318.4 264.5,325.1 268.5,329.3 272.5,328.8 276.5,333.4 280.5,343.5 284.5,343.5 288.5,325.9 292.5,340.1 296.5,352.6 300.5,341.8 304.5,344.3 308.5,340.0 312.5,331.0 316.5,326.0 320.5,315.0 324.5,345.1 328.5,342.6 332.5,340.0 336.5,351.8 340.5,332.6 344.5,338.4 348.5,345.0 352.5,333.4 356.5,323.4 360.5,328.4 364.5,321.8 368.5,327.6 372.5,328.4 376.5,326.8 380.5,323.4 384.5,319.2 388.5,333.4 392.5,326.8 396.5,318.4 400.5,315.0 404.5,314.7 408.5,314.2 412.5,295.0 416.5,300.0 420.5,275.0 424.5,246.5 428.5,263.5 432.5,280.2 436.5,278.5 440.5,276.5 444.5,290.2 448.5,260.2 452.5,264.3 456.5,256.0 460.5,237.6 464.5,237.6 468.5,200.9 472.5,200.0 476.5,198.7 480.5,199.2 484.5,200.9 488.5,203.0 492.5,205.9 496.5,205.0 500.5,203.4 504.5,207.0 508.5,203.4 512.5,198.4 516.5,177.5 520.5,180.0 524.5,184.2 528.5,160.1 532.5,161.8 536.5,163.0 540.5,121.2 544.5,109.5 548.5,110.7 552.5,110.7 556.5,108.4 560.5,112.9 564.5,107.9 568.5,122.9 572.5,107.0 576.5,105.4 580.5,114.6 584.5,118.4 588.5,122.1 592.5,121.2 596.5,123.7 600.5,126.2 604.5,130.4 608.5,112.9 612.5,144.6 616.5,148.8 620.5,167.1 624.5,173.8 628.5,173.5 632.5,182.2 636.5,188.8 640.5,180.5 644.5,162.1 648.5,163.8 652.5,182.2 656.5,178.0 660.5,176.3 664.5,178.8 668.5,178.0 672.5,163.8 676.5,172.1 680.5,160.5 684.5,163.8 688.5,145.4 692.5,135.4 696.5,131.2 700.5,129.6 704.5,127.9 708.5,127.1 712.5,133.8 716.5,126.2 720.5,131.2 724.5,122.9 728.5,132.1 732.5,142.1 736.5,148.8 740.5,122.1 744.5,120.1 748.5,121.7 752.5,114.6 756.5,109.5 760.5,115.4 764.5,112.9 768.5,94.5 772.5,99.5 776.5,96.2 780.5,91.2 784.5,93.7 788.5,90.3 792.5,103.4 796.5,99.5 800.5,109.5 804.5,117.1 808.5,112.9 812.5,127.9 816.5,132.1 820.5,135.4 824.5,132.1 828.5,119.1 832.5,196.7 836.5,214.2 840.5,215.1 844.5,226.8 848.5,233.4 852.5,249.3 856.5,248.5 860.5,247.6 864.5,249.3 868.5,235.1 872.5,234.3 876.5,234.3 880.5,236.0 884.5,226.8 888.5,227.6 892.5,240.1 896.5,256.0 900.5,236.0 904.5,232.6 908.5,246.0 912.5,244.3 916.5,262.7 920.5,281.5 924.5,265.2 928.5,241.0 932.5,252.6 936.5,256.8 940.5,261.5 944.5,258.5 948.5,266.8" fill="none" stroke="#2ee02e" stroke-width="1" stroke-linejoin="round" shape-rendering="crispEdges"/><g shape-rendering="crispEdges"><line x1="5" y1="267.5" x2="1311" y2="267.5" stroke="#b0b0b0"/><line x1="5" y1="89.5" x2="1311" y2="89.5" stroke="#b42222"/><line x1="5" y1="282.5" x2="1311" y2="282.5" stroke="#b42222"/><rect x="4.5" y="79.5" width="1307" height="583" fill="none" stroke="#000"/><path d="M1049 78 L1057 78 L1053 83 Z" fill="#b4b4b4"/><line x1="1312" y1="119.5" x2="1316" y2="119.5" stroke="#000"/><line x1="1312" y1="151.5" x2="1316" y2="151.5" stroke="#000"/><line x1="1312" y1="182.5" x2="1316" y2="182.5" stroke="#000"/><line x1="1312" y1="215.5" x2="1316" y2="215.5" stroke="#000"/><line x1="1312" y1="246.5" x2="1316" y2="246.5" stroke="#000"/><line x1="1312" y1="279.5" x2="1316" y2="279.5" stroke="#000"/><line x1="1312" y1="311.5" x2="1316" y2="311.5" stroke="#000"/><line x1="1312" y1="342.5" x2="1316" y2="342.5" stroke="#000"/><line x1="1312" y1="375.5" x2="1316" y2="375.5" stroke="#000"/><line x1="1312" y1="406.5" x2="1316" y2="406.5" stroke="#000"/><line x1="1312" y1="439.5" x2="1316" y2="439.5" stroke="#000"/><line x1="1312" y1="470.5" x2="1316" y2="470.5" stroke="#000"/><line x1="1312" y1="502.5" x2="1316" y2="502.5" stroke="#000"/><line x1="1312" y1="535.5" x2="1316" y2="535.5" stroke="#000"/><line x1="1312" y1="566.5" x2="1316" y2="566.5" stroke="#000"/><line x1="1312" y1="599.5" x2="1316" y2="599.5" stroke="#000"/><line x1="1312" y1="630.5" x2="1316" y2="630.5" stroke="#000"/><line x1="4.5" y1="663" x2="4.5" y2="667" stroke="#000"/><line x1="68.5" y1="663" x2="68.5" y2="667" stroke="#000"/><line x1="132.5" y1="663" x2="132.5" y2="667" stroke="#000"/><line x1="196.5" y1="663" x2="196.5" y2="667" stroke="#000"/><line x1="260.5" y1="663" x2="260.5" y2="667" stroke="#000"/><line x1="324.5" y1="663" x2="324.5" y2="667" stroke="#000"/><line x1="388.5" y1="663" x2="388.5" y2="667" stroke="#000"/><line x1="452.5" y1="663" x2="452.5" y2="667" stroke="#000"/><line x1="516.5" y1="663" x2="516.5" y2="667" stroke="#000"/><line x1="580.5" y1="663" x2="580.5" y2="667" stroke="#000"/><line x1="644.5" y1="663" x2="644.5" y2="667" stroke="#000"/><line x1="708.5" y1="663" x2="708.5" y2="667" stroke="#000"/><line x1="772.5" y1="663" x2="772.5" y2="667" stroke="#000"/><line x1="836.5" y1="663" x2="836.5" y2="667" stroke="#000"/><line x1="900.5" y1="663" x2="900.5" y2="667" stroke="#000"/><line x1="964.5" y1="663" x2="964.5" y2="667" stroke="#000"/><line x1="1028.5" y1="663" x2="1028.5" y2="667" stroke="#000"/><line x1="1312" y1="86.5" x2="1316" y2="86.5" stroke="#000"/><rect x="1314" y="84" width="39" height="11" fill="#e60000"/><rect x="1314" y="277" width="39" height="11" fill="#e60000"/><rect x="1314" y="262" width="39" height="11" fill="#c0c0c0"/></g><text x="1317.5" y="122.3" font-size="9.2" textLength="31.5" lengthAdjust="spacingAndGlyphs" stroke="#000" stroke-width="0.2">1.34540</text><text x="1317.5" y="154.3" font-size="9.2" textLength="31.5" lengthAdjust="spacingAndGlyphs" stroke="#000" stroke-width="0.2">1.34220</text><text x="1317.5" y="185.3" font-size="9.2" textLength="31.5" lengthAdjust="spacingAndGlyphs" stroke="#000" stroke-width="0.2">1.33900</text><text x="1317.5" y="218.3" font-size="9.2" textLength="31.5" lengthAdjust="spacingAndGlyphs" stroke="#000" stroke-width="0.2">1.33580</text><text x="1317.5" y="249.3" font-size="9.2" textLength="31.5" lengthAdjust="spacingAndGlyphs" stroke="#000" stroke-width="0.2">1.33260</text><text x="1317.5" y="314.3" font-size="9.2" textLength="31.5" lengthAdjust="spacingAndGlyphs" stroke="#000" stroke-width="0.2">1.32620</text><text x="1317.5" y="345.3" font-size="9.2" textLength="31.5" lengthAdjust="spacingAndGlyphs" stroke="#000" stroke-width="0.2">1.32300</text><text x="1317.5" y="378.3" font-size="9.2" textLength="31.5" lengthAdjust="spacingAndGlyphs" stroke="#000" stroke-width="0.2">1.31980</text><text x="1317.5" y="409.3" font-size="9.2" textLength="31.5" lengthAdjust="spacingAndGlyphs" stroke="#000" stroke-width="0.2">1.31660</text><text x="1317.5" y="442.3" font-size="9.2" textLength="31.5" lengthAdjust="spacingAndGlyphs" stroke="#000" stroke-width="0.2">1.31340</text><text x="1317.5" y="473.3" font-size="9.2" textLength="31.5" lengthAdjust="spacingAndGlyphs" stroke="#000" stroke-width="0.2">1.31020</text><text x="1317.5" y="505.3" font-size="9.2" textLength="31.5" lengthAdjust="spacingAndGlyphs" stroke="#000" stroke-width="0.2">1.30700</text><text x="1317.5" y="538.3" font-size="9.2" textLength="31.5" lengthAdjust="spacingAndGlyphs" stroke="#000" stroke-width="0.2">1.30380</text><text x="1317.5" y="569.3" font-size="9.2" textLength="31.5" lengthAdjust="spacingAndGlyphs" stroke="#000" stroke-width="0.2">1.30060</text><text x="1317.5" y="602.3" font-size="9.2" textLength="31.5" lengthAdjust="spacingAndGlyphs" stroke="#000" stroke-width="0.2">1.29740</text><text x="1317.5" y="633.3" font-size="9.2" textLength="31.5" lengthAdjust="spacingAndGlyphs" stroke="#000" stroke-width="0.2">1.29420</text><text x="1317.5" y="93" font-size="9.2" fill="#fff" textLength="31.5" lengthAdjust="spacingAndGlyphs">1.34830</text><text x="1317.5" y="286" font-size="9.2" fill="#fff" textLength="31.5" lengthAdjust="spacingAndGlyphs">1.32900</text><text x="1317.5" y="271" font-size="9.2" fill="#fff" textLength="31.5" lengthAdjust="spacingAndGlyphs">1.33053</text><text x="5" y="674.1" font-size="9" stroke="#000" stroke-width="0.12">16 Feb 2012</text><text x="69" y="674.1" font-size="9" stroke="#000" stroke-width="0.12">16 Feb 16:00</text><text x="133" y="674.1" font-size="9" stroke="#000" stroke-width="0.12">17 Feb 08:00</text><text x="197" y="674.1" font-size="9" stroke="#000" stroke-width="0.12">20 Feb 00:00</text><text x="261" y="674.1" font-size="9" stroke="#000" stroke-width="0.12">20 Feb 16:00</text><text x="325" y="674.1" font-size="9" stroke="#000" stroke-width="0.12">21 Feb 08:00</text><text x="389" y="674.1" font-size="9" stroke="#000" stroke-width="0.12">22 Feb 00:00</text><text x="453" y="674.1" font-size="9" stroke="#000" stroke-width="0.12">22 Feb 16:00</text><text x="517" y="674.1" font-size="9" stroke="#000" stroke-width="0.12">23 Feb 08:00</text><text x="581" y="674.1" font-size="9" stroke="#000" stroke-width="0.12">24 Feb 00:00</text><text x="645" y="674.1" font-size="9" stroke="#000" stroke-width="0.12">24 Feb 16:00</text><text x="709" y="674.1" font-size="9" stroke="#000" stroke-width="0.12">27 Feb 08:00</text><text x="773" y="674.1" font-size="9" stroke="#000" stroke-width="0.12">28 Feb 00:00</text><text x="837" y="674.1" font-size="9" stroke="#000" stroke-width="0.12">28 Feb 16:00</text><text x="901" y="674.1" font-size="9" stroke="#000" stroke-width="0.12">29 Feb 08:00</text><text x="965" y="674.1" font-size="9" stroke="#000" stroke-width="0.12">1 Mar 00:00</text><text x="1029" y="674.1" font-size="9" stroke="#000" stroke-width="0.12">1 Mar 16:00</text><line x1="2" y1="683.5" x2="1364" y2="683.5" stroke="#c8c8c8" stroke-dasharray="1 1" shape-rendering="crispEdges"/><line x1="1364.5" y1="76" x2="1364.5" y2="683" stroke="#c8c8c8" stroke-dasharray="1 1" shape-rendering="crispEdges"/></svg>
</div></body></html>
